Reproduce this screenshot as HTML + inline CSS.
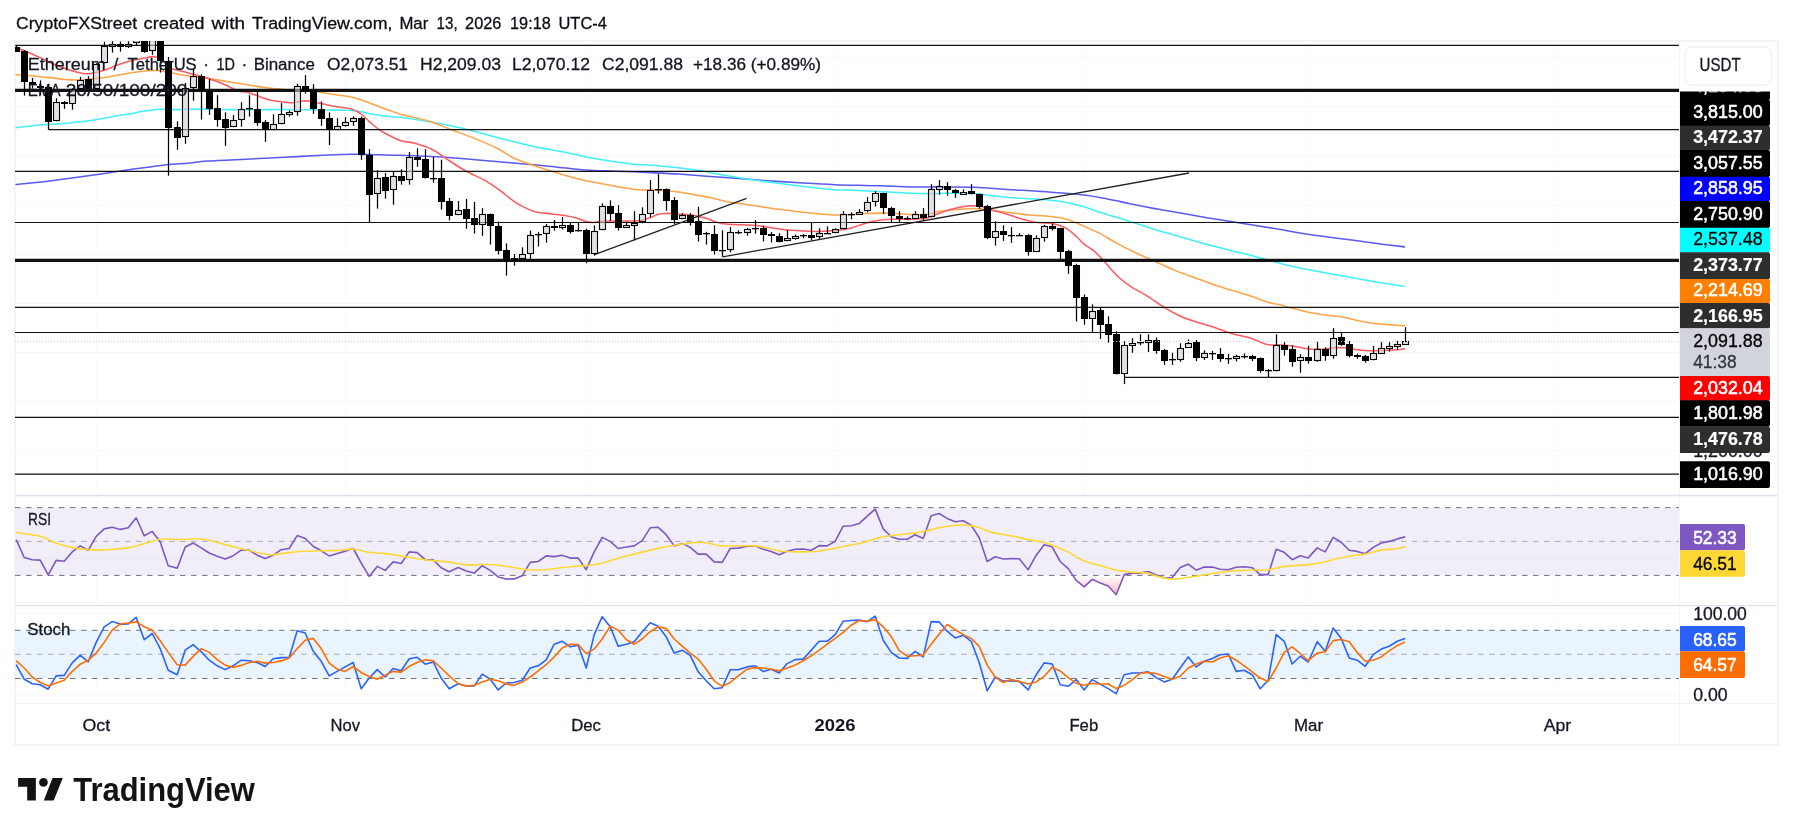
<!DOCTYPE html>
<html lang="en"><head><meta charset="utf-8"><title>ETHUSDT 1D chart</title>
<style>html,body{margin:0;padding:0;background:#fff;}body{width:1793px;height:835px;overflow:hidden;}svg{display:block;will-change:transform;}text{font-family:"Liberation Sans", sans-serif;}</style></head><body>
<svg width="1793" height="835" viewBox="0 0 1793 835">
<defs>
<clipPath id="cpMain"><rect x="15" y="41" width="1664" height="454"/></clipPath>
<clipPath id="cpRsi"><rect x="15" y="496" width="1664" height="109"/></clipPath>
<clipPath id="cpSt"><rect x="15" y="606" width="1664" height="97"/></clipPath>
<clipPath id="cpAxis"><rect x="1679" y="91.5" width="99" height="404"/></clipPath>
<linearGradient id="gOS" x1="0" y1="0" x2="0" y2="1"><stop offset="0" stop-color="#ffffff"/><stop offset="1" stop-color="#f7a8ad"/></linearGradient>
</defs>
<rect x="0" y="0" width="1793" height="835" fill="#ffffff"/>
<rect x="14.9" y="40.9" width="1763" height="704.1" fill="#ffffff" stroke="#f3f3f3" stroke-width="1.8"/>
<line x1="15" x2="1679" y1="57.5" y2="57.5" stroke="#f7f7f9" stroke-width="1"/>
<line x1="15" x2="1679" y1="106.6" y2="106.6" stroke="#f7f7f9" stroke-width="1"/>
<line x1="15" x2="1679" y1="155.8" y2="155.8" stroke="#f7f7f9" stroke-width="1"/>
<line x1="15" x2="1679" y1="205.0" y2="205.0" stroke="#f7f7f9" stroke-width="1"/>
<line x1="15" x2="1679" y1="254.2" y2="254.2" stroke="#f7f7f9" stroke-width="1"/>
<line x1="15" x2="1679" y1="303.4" y2="303.4" stroke="#f7f7f9" stroke-width="1"/>
<line x1="15" x2="1679" y1="352.6" y2="352.6" stroke="#f7f7f9" stroke-width="1"/>
<line x1="15" x2="1679" y1="401.8" y2="401.8" stroke="#f7f7f9" stroke-width="1"/>
<line x1="15" x2="1679" y1="451.0" y2="451.0" stroke="#f7f7f9" stroke-width="1"/>
<line x1="15" x2="1679" y1="558.4" y2="558.4" stroke="#f7f7f9" stroke-width="1"/>
<line x1="15" x2="1679" y1="613.4" y2="613.4" stroke="#f7f7f9" stroke-width="1"/>
<line x1="15" x2="1679" y1="694.8" y2="694.8" stroke="#f7f7f9" stroke-width="1"/>
<line x1="96.7" x2="96.7" y1="41" y2="703" stroke="#fafafb" stroke-width="1"/>
<line x1="345.6" x2="345.6" y1="41" y2="703" stroke="#fafafb" stroke-width="1"/>
<line x1="586.5" x2="586.5" y1="41" y2="703" stroke="#fafafb" stroke-width="1"/>
<line x1="835.3" x2="835.3" y1="41" y2="703" stroke="#fafafb" stroke-width="1"/>
<line x1="1084.2" x2="1084.2" y1="41" y2="703" stroke="#fafafb" stroke-width="1"/>
<line x1="1309.0" x2="1309.0" y1="41" y2="703" stroke="#fafafb" stroke-width="1"/>
<line x1="1557.9" x2="1557.9" y1="41" y2="703" stroke="#fafafb" stroke-width="1"/>
<line x1="1679.5" x2="1679.5" y1="41" y2="745" stroke="#f6f6f8" stroke-width="1"/>
<line x1="15" x2="1777" y1="703.5" y2="703.5" stroke="#f3f3f5" stroke-width="1"/>
<line x1="15" x2="1777" y1="495.5" y2="495.5" stroke="#dfe3ee" stroke-width="1.3"/>
<line x1="15" x2="1777" y1="605.6" y2="605.6" stroke="#dfe3ee" stroke-width="1.2"/>
<g clip-path="url(#cpMain)">
<path d="M15.4 184.6 C21.8 183.9 40.5 182.1 53.5 180.5 C66.5 178.9 81.2 176.9 93.7 175.1 C106.2 173.3 119.1 171.2 128.5 169.8 C137.9 168.5 144.7 167.7 150.0 167.0 C155.3 166.3 157.4 165.9 160.6 165.5 C163.8 165.1 164.7 164.9 169.2 164.5 C173.7 164.1 181.0 163.8 187.4 163.2 C193.8 162.6 197.8 161.8 207.5 161.1 C217.2 160.4 233.0 159.8 245.8 159.2 C258.6 158.6 271.3 158.0 284.1 157.3 C296.9 156.7 310.9 155.8 322.4 155.3 C333.9 154.8 345.1 154.3 353.1 154.2 C361.1 154.1 362.8 154.4 370.3 154.6 C377.8 154.8 387.2 154.9 398.3 155.3 C409.4 155.7 423.8 156.1 436.6 156.8 C449.4 157.5 462.2 158.7 475.0 159.7 C487.8 160.7 500.5 161.9 513.3 163.0 C526.1 164.1 539.6 165.2 551.6 166.4 C563.6 167.6 574.2 169.3 585.0 170.1 C595.8 170.9 605.8 170.8 616.2 171.2 C626.6 171.6 637.1 172.0 647.5 172.5 C657.9 173.0 668.3 173.4 678.7 174.1 C689.1 174.8 699.5 175.6 709.9 176.4 C720.3 177.2 730.8 177.9 741.2 178.7 C751.6 179.5 762.0 180.4 772.4 181.1 C782.8 181.8 793.2 182.5 803.6 183.1 C814.0 183.7 824.6 184.3 834.8 184.7 C845.0 185.1 857.3 185.3 865.0 185.5 C872.7 185.7 873.3 185.6 881.2 185.8 C889.1 186.0 902.1 186.7 912.5 186.9 C922.9 187.1 933.3 186.8 943.7 186.9 C954.1 187.0 964.5 186.9 974.9 187.3 C985.3 187.7 995.8 188.8 1006.2 189.4 C1016.6 190.1 1027.0 190.5 1037.4 191.2 C1047.8 191.9 1060.8 192.9 1068.6 193.6 C1076.4 194.2 1079.0 194.4 1084.2 195.1 C1089.4 195.8 1094.6 196.6 1099.8 197.5 C1105.0 198.4 1110.5 199.6 1115.5 200.6 C1120.5 201.6 1122.6 202.2 1130.0 203.7 C1137.4 205.2 1148.3 207.4 1160.0 209.5 C1171.7 211.6 1186.7 214.2 1200.0 216.5 C1213.3 218.8 1226.1 220.8 1240.0 223.0 C1253.9 225.2 1272.2 228.1 1283.5 230.0 C1294.8 231.9 1297.1 232.7 1307.5 234.2 C1317.9 235.7 1333.0 237.5 1345.8 239.2 C1358.6 240.9 1374.2 243.1 1384.1 244.4 C1394.0 245.7 1401.6 246.5 1405.1 246.9" fill="none" stroke="#5a5af2" stroke-width="1.55" stroke-linejoin="round" stroke-linecap="butt"/>
<path d="M15.4 127.7 C19.0 127.3 30.4 125.8 36.8 125.2 C43.1 124.6 49.0 124.6 53.5 124.3 C58.0 124.0 57.5 124.2 63.7 123.6 C69.9 123.0 81.6 121.9 90.5 120.6 C99.4 119.3 111.0 116.9 117.3 115.8 C123.6 114.7 124.0 115.0 128.5 114.2 C133.0 113.4 138.9 111.9 144.2 111.1 C149.5 110.3 154.7 109.5 160.3 109.2 C165.9 109.0 171.4 109.6 177.7 109.6 C183.9 109.6 190.0 109.1 197.8 109.1 C205.6 109.1 216.0 109.4 224.7 109.5 C233.4 109.6 240.1 109.8 250.0 109.8 C259.9 109.8 272.0 109.4 284.1 109.4 C296.2 109.4 311.8 109.8 322.4 109.9 C333.0 110.0 341.7 109.9 348.0 110.2 C354.3 110.5 356.3 110.9 360.0 111.5 C363.7 112.1 365.3 113.0 370.3 113.8 C375.3 114.6 384.7 116.0 389.9 116.6 C395.1 117.2 395.2 116.7 401.6 117.5 C408.0 118.3 419.5 120.1 428.4 121.6 C437.3 123.1 448.3 125.3 455.1 126.7 C461.9 128.1 462.7 128.3 469.2 130.0 C475.7 131.7 486.8 134.8 494.1 136.7 C501.5 138.6 506.9 139.9 513.3 141.5 C519.7 143.1 526.0 144.9 532.4 146.3 C538.8 147.7 545.2 148.5 551.6 149.7 C558.0 150.9 564.4 152.1 570.8 153.4 C577.2 154.8 584.4 156.7 589.9 157.8 C595.4 158.9 596.7 159.0 603.7 160.0 C610.7 161.0 621.9 162.9 631.8 163.9 C641.7 164.9 652.7 165.2 663.1 166.2 C673.5 167.2 685.2 168.4 694.3 169.7 C703.4 171.0 709.9 172.7 717.7 174.1 C725.5 175.5 732.1 176.6 741.2 178.0 C750.3 179.4 762.0 181.2 772.4 182.6 C782.8 184.0 793.2 185.3 803.6 186.5 C814.0 187.7 827.1 189.1 834.8 189.7 C842.5 190.3 844.9 189.7 850.0 189.9 C855.1 190.1 860.4 190.6 865.6 190.9 C870.8 191.2 876.0 191.4 881.2 191.7 C886.4 192.0 891.6 192.2 896.8 192.5 C902.0 192.8 907.3 193.1 912.5 193.3 C917.7 193.5 922.9 193.6 928.1 193.6 C933.3 193.6 938.5 193.4 943.7 193.3 C948.9 193.2 954.1 193.2 959.3 193.3 C964.5 193.4 969.7 193.2 974.9 193.6 C980.1 194.0 985.3 195.0 990.5 195.6 C995.7 196.2 1001.0 196.8 1006.2 197.2 C1011.4 197.6 1016.6 198.0 1021.8 198.3 C1027.0 198.7 1032.2 198.9 1037.4 199.3 C1042.6 199.7 1047.8 200.0 1053.0 200.6 C1058.2 201.2 1063.4 201.9 1068.6 202.9 C1073.8 203.9 1079.0 205.2 1084.2 206.8 C1089.4 208.4 1094.6 210.6 1099.8 212.3 C1105.0 214.0 1110.5 215.5 1115.5 217.0 C1120.5 218.5 1124.2 219.6 1130.0 221.4 C1135.8 223.2 1142.7 225.7 1150.0 228.0 C1157.3 230.3 1166.7 232.9 1174.0 235.0 C1181.3 237.1 1187.5 238.8 1194.1 240.7 C1200.6 242.5 1206.9 244.4 1213.3 246.1 C1219.7 247.8 1226.0 249.3 1232.4 250.9 C1238.8 252.5 1245.5 254.0 1251.6 255.6 C1257.7 257.2 1263.1 258.7 1269.2 260.3 C1275.3 261.9 1280.3 263.6 1288.3 265.4 C1296.3 267.2 1307.5 269.3 1317.1 271.2 C1326.7 273.1 1336.2 274.9 1345.8 276.6 C1355.4 278.4 1364.6 280.1 1374.5 281.7 C1384.4 283.3 1400.0 285.5 1405.1 286.3" fill="none" stroke="#40f0f9" stroke-width="1.55" stroke-linejoin="round" stroke-linecap="butt"/>
<path d="M15.4 74.6 C19.0 74.9 28.7 75.4 36.8 76.2 C44.8 77.0 56.5 78.7 63.7 79.3 C70.9 79.9 73.1 80.3 79.8 80.0 C86.5 79.7 95.4 78.8 103.9 77.6 C112.4 76.4 122.2 74.1 130.7 72.9 C139.2 71.7 148.2 70.2 154.9 70.2 C161.6 70.2 165.4 71.8 171.0 72.8 C176.6 73.8 182.2 75.1 188.3 76.0 C194.4 76.9 201.1 77.4 207.5 78.3 C213.9 79.2 220.2 80.4 226.6 81.4 C233.0 82.4 239.4 83.5 245.8 84.5 C252.2 85.5 258.6 86.7 265.0 87.5 C271.4 88.3 277.7 89.0 284.1 89.4 C290.5 89.9 296.9 89.7 303.3 90.2 C309.7 90.8 316.0 91.8 322.4 92.7 C328.8 93.6 336.8 94.9 341.6 95.6 C346.4 96.3 348.0 96.4 351.2 97.1 C354.4 97.8 357.6 98.8 360.8 99.8 C364.0 100.8 367.1 102.0 370.3 103.2 C373.5 104.4 376.6 105.9 379.9 107.1 C383.2 108.3 386.3 109.2 389.9 110.5 C393.5 111.8 395.2 112.8 401.6 114.6 C408.0 116.3 420.0 118.4 428.4 121.0 C436.8 123.6 444.2 127.1 452.0 130.0 C459.8 132.9 467.3 135.5 475.0 138.6 C482.7 141.7 491.6 145.6 498.0 148.8 C504.4 152.0 507.6 155.1 513.3 157.8 C519.0 160.5 526.0 162.9 532.4 165.1 C538.8 167.3 545.2 169.2 551.6 171.2 C558.0 173.2 565.0 175.3 570.8 176.9 C576.5 178.5 581.1 179.7 586.1 180.8 C591.1 181.9 595.6 182.5 600.6 183.4 C605.6 184.3 611.0 185.6 616.2 186.5 C621.4 187.4 626.6 188.3 631.8 188.9 C637.0 189.5 642.3 189.8 647.5 190.0 C652.7 190.2 657.9 190.1 663.1 190.4 C668.3 190.7 673.5 191.3 678.7 192.0 C683.9 192.7 689.1 193.8 694.3 194.7 C699.5 195.6 704.7 196.4 709.9 197.5 C715.1 198.6 720.3 200.4 725.5 201.4 C730.7 202.4 736.0 202.9 741.2 203.7 C746.4 204.5 751.6 205.3 756.8 206.1 C762.0 206.9 767.2 207.7 772.4 208.4 C777.6 209.1 782.8 209.7 788.0 210.3 C793.2 211.0 798.4 211.7 803.6 212.3 C808.8 212.9 814.0 213.5 819.2 213.9 C824.4 214.3 829.6 214.9 834.8 215.0 C840.0 215.1 845.4 214.7 850.5 214.5 C855.6 214.3 860.5 213.8 865.6 213.6 C870.7 213.4 876.0 213.1 881.2 213.1 C886.4 213.1 891.6 213.3 896.8 213.6 C902.0 213.9 907.3 214.6 912.5 214.7 C917.7 214.8 924.0 214.8 928.1 214.3 C932.2 213.8 933.5 212.5 937.4 211.8 C941.3 211.1 946.5 210.5 951.5 210.0 C956.5 209.5 961.9 208.9 967.1 208.7 C972.3 208.5 977.5 208.5 982.7 208.9 C987.9 209.3 993.1 210.5 998.3 211.2 C1003.5 211.9 1008.8 212.5 1014.0 213.1 C1019.2 213.7 1024.4 214.5 1029.6 215.0 C1034.8 215.5 1040.0 215.4 1045.2 215.9 C1050.4 216.4 1056.4 217.0 1060.8 217.8 C1065.2 218.6 1067.8 219.5 1071.7 220.9 C1075.6 222.3 1079.5 224.3 1084.2 226.4 C1088.9 228.5 1094.2 230.5 1099.8 233.4 C1105.3 236.3 1111.4 240.3 1117.5 243.6 C1123.6 246.9 1130.2 250.2 1136.6 253.2 C1143.0 256.2 1149.4 258.9 1155.8 261.8 C1162.2 264.7 1168.6 267.8 1175.0 270.4 C1181.4 273.0 1187.7 275.2 1194.1 277.5 C1200.5 279.8 1206.9 282.2 1213.3 284.4 C1219.7 286.6 1226.0 288.6 1232.4 290.6 C1238.8 292.6 1245.8 294.4 1251.6 296.3 C1257.4 298.2 1262.4 300.8 1267.2 302.2 C1272.0 303.6 1276.8 304.0 1280.3 304.8 C1283.8 305.6 1283.8 306.0 1288.3 307.2 C1292.8 308.4 1301.1 310.6 1307.5 312.0 C1313.9 313.4 1321.2 314.5 1326.6 315.3 C1332.0 316.1 1335.3 315.8 1340.1 316.6 C1344.9 317.4 1349.7 319.0 1355.4 320.1 C1361.1 321.2 1368.1 322.7 1374.5 323.5 C1380.9 324.3 1388.6 324.6 1393.7 325.0 C1398.8 325.4 1403.2 325.7 1405.1 325.8" fill="none" stroke="#ffa347" stroke-width="1.55" stroke-linejoin="round" stroke-linecap="butt"/>
<path d="M15.5 47.0 C16.1 47.3 15.8 47.2 19.4 48.7 C22.9 50.2 30.5 53.3 36.8 56.1 C43.1 58.9 50.3 62.8 57.0 65.5 C63.7 68.2 71.9 70.8 77.0 72.2 C82.1 73.6 83.3 74.1 87.8 73.8 C92.3 73.5 97.9 72.0 103.9 70.2 C109.9 68.4 117.3 64.8 124.0 62.8 C130.7 60.8 139.0 59.1 144.2 58.1 C149.3 57.1 151.6 56.1 154.9 56.8 C158.2 57.5 161.9 60.3 164.3 62.1 C166.7 63.9 165.2 66.0 169.2 67.8 C173.2 69.6 181.9 71.2 188.3 73.0 C194.7 74.8 201.1 76.2 207.5 78.3 C213.9 80.4 221.5 83.4 226.6 85.5 C231.7 87.6 234.3 89.8 238.0 91.0 C241.7 92.2 244.1 91.3 249.0 92.7 C253.9 94.1 262.5 97.9 267.7 99.4 C272.9 100.9 276.3 101.1 280.3 101.7 C284.3 102.3 288.0 102.9 291.8 102.8 C295.6 102.7 299.8 101.1 303.3 100.9 C306.8 100.7 308.1 100.8 312.9 101.7 C317.7 102.6 325.6 104.9 332.0 106.1 C338.4 107.3 346.4 107.7 351.2 109.0 C356.0 110.3 357.6 111.6 360.8 113.8 C364.0 116.0 367.1 119.7 370.3 122.4 C373.5 125.1 376.6 127.9 379.9 130.1 C383.2 132.3 386.5 134.1 389.9 135.8 C393.3 137.5 395.9 139.2 400.2 140.5 C404.5 141.8 410.2 141.9 415.6 143.4 C421.0 144.9 427.7 147.1 432.8 149.7 C437.9 152.2 440.8 155.2 446.2 158.7 C451.6 162.2 459.0 167.2 465.4 170.8 C471.8 174.4 478.8 176.9 484.5 180.2 C490.2 183.5 495.1 186.9 499.9 190.4 C504.7 193.9 509.5 198.2 513.3 200.9 C517.1 203.6 519.1 204.8 522.9 206.6 C526.7 208.4 531.5 210.8 536.3 212.0 C541.1 213.2 547.1 213.3 551.6 213.9 C556.1 214.5 559.0 214.6 563.1 215.3 C567.2 216.0 572.7 217.1 576.5 218.1 C580.3 219.1 583.2 220.9 586.1 221.6 C589.0 222.3 591.4 222.5 593.8 222.4 C596.2 222.3 596.9 221.4 600.6 221.2 C604.3 220.9 610.2 220.9 616.2 220.9 C622.2 220.9 631.3 221.3 636.5 220.9 C641.7 220.5 643.9 219.7 647.5 218.6 C651.1 217.5 655.3 215.2 658.4 214.3 C661.5 213.4 662.8 213.5 666.2 213.4 C669.6 213.3 674.0 213.6 678.7 213.9 C683.4 214.2 689.6 214.6 694.3 215.4 C699.0 216.2 702.9 217.4 706.8 218.6 C710.7 219.8 714.6 221.6 717.7 222.5 C720.8 223.4 721.6 223.6 725.5 224.0 C729.4 224.4 736.0 224.5 741.2 224.8 C746.4 225.1 751.6 225.1 756.8 225.6 C762.0 226.1 767.2 227.2 772.4 227.9 C777.6 228.6 782.8 229.5 788.0 230.0 C793.2 230.5 798.4 230.8 803.6 231.0 C808.8 231.2 814.0 231.6 819.2 231.5 C824.4 231.4 829.6 231.2 834.8 230.6 C840.0 230.0 845.4 229.4 850.5 228.2 C855.6 227.0 860.5 224.5 865.6 223.2 C870.7 221.8 876.0 220.8 881.2 220.1 C886.4 219.4 891.6 219.4 896.8 219.3 C902.0 219.2 907.3 219.6 912.5 219.3 C917.7 219.1 924.0 218.7 928.1 217.8 C932.2 216.9 933.5 215.3 937.4 213.9 C941.3 212.5 946.5 210.5 951.5 209.2 C956.5 207.9 963.2 206.7 967.1 206.1 C971.0 205.5 972.3 205.7 974.9 205.8 C977.5 205.9 980.1 206.2 982.7 206.8 C985.3 207.5 986.6 208.5 990.5 209.7 C994.4 210.9 1001.0 212.3 1006.2 213.9 C1011.4 215.5 1016.6 217.6 1021.8 219.0 C1027.0 220.4 1032.2 221.7 1037.4 222.5 C1042.6 223.3 1048.3 222.8 1053.0 223.7 C1057.7 224.6 1061.6 225.8 1065.5 227.9 C1069.4 230.0 1073.3 233.8 1076.4 236.5 C1079.5 239.2 1081.3 242.0 1084.2 244.3 C1087.1 246.7 1090.5 248.0 1093.6 250.6 C1096.7 253.2 1099.0 255.7 1103.0 260.0 C1107.0 264.3 1112.8 271.8 1117.5 276.2 C1122.2 280.6 1126.1 283.5 1130.9 286.7 C1135.7 289.9 1140.8 292.0 1146.2 295.4 C1151.6 298.8 1158.1 303.5 1163.5 306.9 C1168.9 310.2 1173.7 313.1 1178.8 315.5 C1183.9 317.9 1188.3 319.3 1194.1 321.2 C1199.8 323.1 1206.9 324.9 1213.3 327.0 C1219.7 329.1 1226.0 331.8 1232.4 333.7 C1238.8 335.6 1245.8 336.7 1251.6 338.5 C1257.3 340.3 1262.1 343.5 1266.9 344.6 C1271.7 345.7 1276.1 344.7 1280.3 344.9 C1284.5 345.1 1287.7 345.2 1292.2 345.9 C1296.7 346.5 1302.4 348.2 1307.5 348.8 C1312.6 349.4 1318.3 349.4 1322.8 349.2 C1327.3 349.0 1330.5 348.0 1334.3 347.8 C1338.1 347.6 1342.0 347.5 1345.8 347.8 C1349.6 348.1 1353.8 349.3 1357.3 349.8 C1360.8 350.3 1363.7 350.6 1366.9 350.7 C1370.1 350.8 1373.0 350.8 1376.5 350.7 C1380.0 350.6 1384.2 350.5 1388.0 350.3 C1391.8 350.1 1396.7 349.6 1399.5 349.4 C1402.3 349.1 1404.2 348.9 1405.1 348.8" fill="none" stroke="#ff5a5f" stroke-width="1.55" stroke-linejoin="round" stroke-linecap="butt"/>
<line x1="15.3" x2="1679" y1="45.4" y2="45.4" stroke="#111111" stroke-width="1.15"/>
<line x1="15.0" x2="1679" y1="90.4" y2="90.4" stroke="#111111" stroke-width="3.2"/>
<line x1="48.3" x2="1679" y1="129.6" y2="129.6" stroke="#111111" stroke-width="1.15"/>
<line x1="15.0" x2="1679" y1="171.3" y2="171.3" stroke="#111111" stroke-width="1.15"/>
<line x1="15.0" x2="1679" y1="222.5" y2="222.5" stroke="#111111" stroke-width="1.15"/>
<line x1="15.0" x2="1679" y1="260.4" y2="260.4" stroke="#111111" stroke-width="3.2"/>
<line x1="15.0" x2="1679" y1="307.3" y2="307.3" stroke="#111111" stroke-width="1.15"/>
<line x1="15.0" x2="1679" y1="332.5" y2="332.5" stroke="#111111" stroke-width="1.15"/>
<line x1="1124.5" x2="1679" y1="377.3" y2="377.3" stroke="#111111" stroke-width="1.15"/>
<line x1="15.0" x2="1679" y1="417.3" y2="417.3" stroke="#111111" stroke-width="1.15"/>
<line x1="15.0" x2="1679" y1="474.1" y2="474.1" stroke="#111111" stroke-width="1.15"/>
<line x1="594.4" y1="254.6" x2="746.6" y2="198.3" stroke="#222" stroke-width="1.3"/>
<line x1="722.6" y1="256.9" x2="1189" y2="173.0" stroke="#222" stroke-width="1.3"/>
<line x1="16.5" x2="16.5" y1="45.4" y2="52.0" stroke="#000" stroke-width="1.25"/>
<rect x="13.0" y="47" width="7" height="5" fill="#000"/>
<line x1="24.5" x2="24.5" y1="50.0" y2="95.7" stroke="#000" stroke-width="1.25"/>
<rect x="21.0" y="51" width="7" height="31" fill="#000"/>
<line x1="32.5" x2="32.5" y1="78.0" y2="88.5" stroke="#000" stroke-width="1.25"/>
<rect x="29.0" y="82" width="7" height="3" fill="#000"/>
<line x1="40.5" x2="40.5" y1="80.3" y2="95.0" stroke="#000" stroke-width="1.25"/>
<rect x="37.0" y="86" width="7" height="2" fill="#000"/>
<line x1="48.5" x2="48.5" y1="85.6" y2="129.4" stroke="#000" stroke-width="1.25"/>
<rect x="45.0" y="87" width="7" height="35" fill="#000"/>
<line x1="56.5" x2="56.5" y1="98.3" y2="102.5" stroke="#000" stroke-width="1.25"/>
<line x1="56.5" x2="56.5" y1="120.5" y2="121.3" stroke="#000" stroke-width="1.25"/>
<rect x="53.5" y="102.5" width="6" height="18" fill="rgba(205,205,216,0.6)" stroke="#000" stroke-width="1.1"/>
<line x1="64.5" x2="64.5" y1="101.1" y2="108.9" stroke="#000" stroke-width="1.25"/>
<rect x="61.0" y="102" width="7" height="2" fill="#000"/>
<line x1="72.5" x2="72.5" y1="88.3" y2="89.5" stroke="#000" stroke-width="1.25"/>
<line x1="72.5" x2="72.5" y1="103.5" y2="109.7" stroke="#000" stroke-width="1.25"/>
<rect x="69.5" y="89.5" width="6" height="14" fill="rgba(205,205,216,0.6)" stroke="#000" stroke-width="1.1"/>
<line x1="80.5" x2="80.5" y1="77.0" y2="80.5" stroke="#000" stroke-width="1.25"/>
<line x1="80.5" x2="80.5" y1="88.5" y2="89.0" stroke="#000" stroke-width="1.25"/>
<rect x="77.5" y="80.5" width="6" height="8" fill="rgba(205,205,216,0.6)" stroke="#000" stroke-width="1.1"/>
<line x1="88.5" x2="88.5" y1="76.2" y2="89.0" stroke="#000" stroke-width="1.25"/>
<rect x="85.0" y="79" width="7" height="10" fill="#000"/>
<line x1="96.5" x2="96.5" y1="63.2" y2="64.5" stroke="#000" stroke-width="1.25"/>
<line x1="96.5" x2="96.5" y1="88.5" y2="89.0" stroke="#000" stroke-width="1.25"/>
<rect x="93.5" y="64.5" width="6" height="24" fill="rgba(205,205,216,0.6)" stroke="#000" stroke-width="1.1"/>
<line x1="104.5" x2="104.5" y1="41.8" y2="46.5" stroke="#000" stroke-width="1.25"/>
<line x1="104.5" x2="104.5" y1="62.5" y2="63.4" stroke="#000" stroke-width="1.25"/>
<rect x="101.5" y="46.5" width="6" height="16" fill="rgba(205,205,216,0.6)" stroke="#000" stroke-width="1.1"/>
<line x1="112.5" x2="112.5" y1="41.2" y2="44.5" stroke="#000" stroke-width="1.25"/>
<line x1="112.5" x2="112.5" y1="46.5" y2="52.6" stroke="#000" stroke-width="1.25"/>
<rect x="109.5" y="44.5" width="6" height="2" fill="rgba(205,205,216,0.6)" stroke="#000" stroke-width="1.1"/>
<line x1="120.5" x2="120.5" y1="41.6" y2="51.6" stroke="#000" stroke-width="1.25"/>
<rect x="117.0" y="44" width="7" height="3" fill="#000"/>
<line x1="128.5" x2="128.5" y1="41.3" y2="44.5" stroke="#000" stroke-width="1.25"/>
<line x1="128.5" x2="128.5" y1="46.5" y2="48.0" stroke="#000" stroke-width="1.25"/>
<rect x="125.5" y="44.5" width="6" height="2" fill="rgba(205,205,216,0.6)" stroke="#000" stroke-width="1.1"/>
<line x1="136.5" x2="136.5" y1="38.0" y2="38.5" stroke="#000" stroke-width="1.25"/>
<line x1="136.5" x2="136.5" y1="42.5" y2="45.0" stroke="#000" stroke-width="1.25"/>
<rect x="133.5" y="38.5" width="6" height="4" fill="rgba(205,205,216,0.6)" stroke="#000" stroke-width="1.1"/>
<line x1="144.5" x2="144.5" y1="36.0" y2="52.7" stroke="#000" stroke-width="1.25"/>
<rect x="141.0" y="36" width="7" height="16" fill="#000"/>
<line x1="152.5" x2="152.5" y1="34.0" y2="36.5" stroke="#000" stroke-width="1.25"/>
<line x1="152.5" x2="152.5" y1="50.5" y2="54.8" stroke="#000" stroke-width="1.25"/>
<rect x="149.5" y="36.5" width="6" height="14" fill="rgba(205,205,216,0.6)" stroke="#000" stroke-width="1.1"/>
<line x1="160.5" x2="160.5" y1="34.0" y2="72.5" stroke="#000" stroke-width="1.25"/>
<rect x="157.0" y="36" width="7" height="25" fill="#000"/>
<line x1="168.5" x2="168.5" y1="57.0" y2="175.7" stroke="#000" stroke-width="1.25"/>
<rect x="165.0" y="61" width="7" height="67" fill="#000"/>
<line x1="177.5" x2="177.5" y1="121.3" y2="149.8" stroke="#000" stroke-width="1.25"/>
<rect x="174.0" y="127" width="7" height="11" fill="#000"/>
<line x1="185.5" x2="185.5" y1="83.0" y2="88.5" stroke="#000" stroke-width="1.25"/>
<line x1="185.5" x2="185.5" y1="136.5" y2="143.8" stroke="#000" stroke-width="1.25"/>
<rect x="182.5" y="88.5" width="6" height="48" fill="rgba(205,205,216,0.6)" stroke="#000" stroke-width="1.1"/>
<line x1="193.5" x2="193.5" y1="68.7" y2="76.5" stroke="#000" stroke-width="1.25"/>
<line x1="193.5" x2="193.5" y1="87.5" y2="100.7" stroke="#000" stroke-width="1.25"/>
<rect x="190.5" y="76.5" width="6" height="11" fill="rgba(205,205,216,0.6)" stroke="#000" stroke-width="1.1"/>
<line x1="201.5" x2="201.5" y1="74.3" y2="119.6" stroke="#000" stroke-width="1.25"/>
<rect x="198.0" y="76" width="7" height="15" fill="#000"/>
<line x1="209.5" x2="209.5" y1="79.1" y2="114.9" stroke="#000" stroke-width="1.25"/>
<rect x="206.0" y="91" width="7" height="18" fill="#000"/>
<line x1="217.5" x2="217.5" y1="95.1" y2="126.7" stroke="#000" stroke-width="1.25"/>
<rect x="214.0" y="108" width="7" height="12" fill="#000"/>
<line x1="225.5" x2="225.5" y1="112.3" y2="145.9" stroke="#000" stroke-width="1.25"/>
<rect x="222.0" y="119" width="7" height="9" fill="#000"/>
<line x1="233.5" x2="233.5" y1="115.1" y2="120.5" stroke="#000" stroke-width="1.25"/>
<line x1="233.5" x2="233.5" y1="126.5" y2="127.2" stroke="#000" stroke-width="1.25"/>
<rect x="230.5" y="120.5" width="6" height="6" fill="rgba(205,205,216,0.6)" stroke="#000" stroke-width="1.1"/>
<line x1="241.5" x2="241.5" y1="102.2" y2="109.5" stroke="#000" stroke-width="1.25"/>
<line x1="241.5" x2="241.5" y1="119.5" y2="126.7" stroke="#000" stroke-width="1.25"/>
<rect x="238.5" y="109.5" width="6" height="10" fill="rgba(205,205,216,0.6)" stroke="#000" stroke-width="1.1"/>
<line x1="249.5" x2="249.5" y1="95.2" y2="116.6" stroke="#000" stroke-width="1.25"/>
<rect x="246.0" y="108" width="7" height="1.3" fill="#000"/>
<line x1="257.5" x2="257.5" y1="91.7" y2="125.8" stroke="#000" stroke-width="1.25"/>
<rect x="254.0" y="109" width="7" height="14" fill="#000"/>
<line x1="265.5" x2="265.5" y1="120.1" y2="141.9" stroke="#000" stroke-width="1.25"/>
<rect x="262.0" y="122" width="7" height="8" fill="#000"/>
<line x1="273.5" x2="273.5" y1="114.3" y2="124.5" stroke="#000" stroke-width="1.25"/>
<line x1="273.5" x2="273.5" y1="129.5" y2="130.1" stroke="#000" stroke-width="1.25"/>
<rect x="270.5" y="124.5" width="6" height="5" fill="rgba(205,205,216,0.6)" stroke="#000" stroke-width="1.1"/>
<line x1="281.5" x2="281.5" y1="103.2" y2="114.5" stroke="#000" stroke-width="1.25"/>
<line x1="281.5" x2="281.5" y1="123.5" y2="124.3" stroke="#000" stroke-width="1.25"/>
<rect x="278.5" y="114.5" width="6" height="9" fill="rgba(205,205,216,0.6)" stroke="#000" stroke-width="1.1"/>
<line x1="289.5" x2="289.5" y1="110.5" y2="112.5" stroke="#000" stroke-width="1.25"/>
<line x1="289.5" x2="289.5" y1="114.5" y2="116.6" stroke="#000" stroke-width="1.25"/>
<rect x="286.5" y="112.5" width="6" height="2" fill="rgba(205,205,216,0.6)" stroke="#000" stroke-width="1.1"/>
<line x1="297.5" x2="297.5" y1="83.7" y2="86.5" stroke="#000" stroke-width="1.25"/>
<line x1="297.5" x2="297.5" y1="111.5" y2="115.7" stroke="#000" stroke-width="1.25"/>
<rect x="294.5" y="86.5" width="6" height="25" fill="rgba(205,205,216,0.6)" stroke="#000" stroke-width="1.1"/>
<line x1="305.5" x2="305.5" y1="75.1" y2="93.6" stroke="#000" stroke-width="1.25"/>
<rect x="302.0" y="86" width="7" height="5" fill="#000"/>
<line x1="313.5" x2="313.5" y1="84.1" y2="113.8" stroke="#000" stroke-width="1.25"/>
<rect x="310.0" y="90" width="7" height="19" fill="#000"/>
<line x1="321.5" x2="321.5" y1="101.3" y2="125.8" stroke="#000" stroke-width="1.25"/>
<rect x="318.0" y="109" width="7" height="10" fill="#000"/>
<line x1="329.5" x2="329.5" y1="112.4" y2="145.0" stroke="#000" stroke-width="1.25"/>
<rect x="326.0" y="118" width="7" height="12" fill="#000"/>
<line x1="337.5" x2="337.5" y1="118.2" y2="126.5" stroke="#000" stroke-width="1.25"/>
<line x1="337.5" x2="337.5" y1="129.5" y2="130.1" stroke="#000" stroke-width="1.25"/>
<rect x="334.5" y="126.5" width="6" height="3" fill="rgba(205,205,216,0.6)" stroke="#000" stroke-width="1.1"/>
<line x1="345.5" x2="345.5" y1="117.2" y2="122.5" stroke="#000" stroke-width="1.25"/>
<line x1="345.5" x2="345.5" y1="125.5" y2="126.6" stroke="#000" stroke-width="1.25"/>
<rect x="342.5" y="122.5" width="6" height="3" fill="rgba(205,205,216,0.6)" stroke="#000" stroke-width="1.1"/>
<line x1="353.5" x2="353.5" y1="116.3" y2="118.5" stroke="#000" stroke-width="1.25"/>
<line x1="353.5" x2="353.5" y1="121.5" y2="125.8" stroke="#000" stroke-width="1.25"/>
<rect x="350.5" y="118.5" width="6" height="3" fill="rgba(205,205,216,0.6)" stroke="#000" stroke-width="1.1"/>
<line x1="361.5" x2="361.5" y1="116.6" y2="159.8" stroke="#000" stroke-width="1.25"/>
<rect x="358.0" y="118" width="7" height="37" fill="#000"/>
<line x1="369.5" x2="369.5" y1="149.2" y2="222.4" stroke="#000" stroke-width="1.25"/>
<rect x="366.0" y="155" width="7" height="40" fill="#000"/>
<line x1="377.5" x2="377.5" y1="170.2" y2="178.5" stroke="#000" stroke-width="1.25"/>
<line x1="377.5" x2="377.5" y1="193.5" y2="208.6" stroke="#000" stroke-width="1.25"/>
<rect x="374.5" y="178.5" width="6" height="15" fill="rgba(205,205,216,0.6)" stroke="#000" stroke-width="1.1"/>
<line x1="385.5" x2="385.5" y1="173.1" y2="198.7" stroke="#000" stroke-width="1.25"/>
<rect x="382.0" y="177" width="7" height="14" fill="#000"/>
<line x1="393.5" x2="393.5" y1="171.2" y2="176.5" stroke="#000" stroke-width="1.25"/>
<line x1="393.5" x2="393.5" y1="189.5" y2="204.7" stroke="#000" stroke-width="1.25"/>
<rect x="390.5" y="176.5" width="6" height="13" fill="rgba(205,205,216,0.6)" stroke="#000" stroke-width="1.1"/>
<line x1="401.5" x2="401.5" y1="169.3" y2="184.6" stroke="#000" stroke-width="1.25"/>
<rect x="398.0" y="176" width="7" height="5" fill="#000"/>
<line x1="409.5" x2="409.5" y1="152.0" y2="157.5" stroke="#000" stroke-width="1.25"/>
<line x1="409.5" x2="409.5" y1="179.5" y2="184.6" stroke="#000" stroke-width="1.25"/>
<rect x="406.5" y="157.5" width="6" height="22" fill="rgba(205,205,216,0.6)" stroke="#000" stroke-width="1.1"/>
<line x1="417.5" x2="417.5" y1="148.2" y2="166.8" stroke="#000" stroke-width="1.25"/>
<rect x="414.0" y="157" width="7" height="3" fill="#000"/>
<line x1="425.5" x2="425.5" y1="149.2" y2="178.5" stroke="#000" stroke-width="1.25"/>
<rect x="422.0" y="159" width="7" height="19" fill="#000"/>
<line x1="433.5" x2="433.5" y1="156.8" y2="182.7" stroke="#000" stroke-width="1.25"/>
<rect x="430.0" y="178" width="7" height="1.3" fill="#000"/>
<line x1="441.5" x2="441.5" y1="159.7" y2="209.5" stroke="#000" stroke-width="1.25"/>
<rect x="438.0" y="178" width="7" height="24" fill="#000"/>
<line x1="449.5" x2="449.5" y1="198.0" y2="220.4" stroke="#000" stroke-width="1.25"/>
<rect x="446.0" y="201" width="7" height="15" fill="#000"/>
<line x1="458.5" x2="458.5" y1="200.9" y2="210.5" stroke="#000" stroke-width="1.25"/>
<line x1="458.5" x2="458.5" y1="214.5" y2="215.3" stroke="#000" stroke-width="1.25"/>
<rect x="455.5" y="210.5" width="6" height="4" fill="rgba(205,205,216,0.6)" stroke="#000" stroke-width="1.1"/>
<line x1="466.5" x2="466.5" y1="199.0" y2="228.7" stroke="#000" stroke-width="1.25"/>
<rect x="463.0" y="209" width="7" height="10" fill="#000"/>
<line x1="474.5" x2="474.5" y1="201.9" y2="233.5" stroke="#000" stroke-width="1.25"/>
<rect x="471.0" y="218" width="7" height="7" fill="#000"/>
<line x1="482.5" x2="482.5" y1="208.2" y2="214.5" stroke="#000" stroke-width="1.25"/>
<line x1="482.5" x2="482.5" y1="224.5" y2="235.8" stroke="#000" stroke-width="1.25"/>
<rect x="479.5" y="214.5" width="6" height="10" fill="rgba(205,205,216,0.6)" stroke="#000" stroke-width="1.1"/>
<line x1="490.5" x2="490.5" y1="213.5" y2="244.6" stroke="#000" stroke-width="1.25"/>
<rect x="487.0" y="214" width="7" height="12" fill="#000"/>
<line x1="498.5" x2="498.5" y1="221.6" y2="254.5" stroke="#000" stroke-width="1.25"/>
<rect x="495.0" y="226" width="7" height="25" fill="#000"/>
<line x1="506.5" x2="506.5" y1="243.4" y2="275.6" stroke="#000" stroke-width="1.25"/>
<rect x="503.0" y="250" width="7" height="10" fill="#000"/>
<line x1="514.5" x2="514.5" y1="254.2" y2="265.7" stroke="#000" stroke-width="1.25"/>
<rect x="511.0" y="258" width="7" height="1.3" fill="#000"/>
<line x1="522.5" x2="522.5" y1="247.3" y2="254.5" stroke="#000" stroke-width="1.25"/>
<line x1="522.5" x2="522.5" y1="258.5" y2="258.8" stroke="#000" stroke-width="1.25"/>
<rect x="519.5" y="254.5" width="6" height="4" fill="rgba(205,205,216,0.6)" stroke="#000" stroke-width="1.1"/>
<line x1="530.5" x2="530.5" y1="230.6" y2="235.5" stroke="#000" stroke-width="1.25"/>
<line x1="530.5" x2="530.5" y1="253.5" y2="258.8" stroke="#000" stroke-width="1.25"/>
<rect x="527.5" y="235.5" width="6" height="18" fill="rgba(205,205,216,0.6)" stroke="#000" stroke-width="1.1"/>
<line x1="538.5" x2="538.5" y1="231.9" y2="246.5" stroke="#000" stroke-width="1.25"/>
<rect x="535.0" y="234" width="7" height="1.3" fill="#000"/>
<line x1="546.5" x2="546.5" y1="223.9" y2="226.5" stroke="#000" stroke-width="1.25"/>
<line x1="546.5" x2="546.5" y1="233.5" y2="242.7" stroke="#000" stroke-width="1.25"/>
<rect x="543.5" y="226.5" width="6" height="7" fill="rgba(205,205,216,0.6)" stroke="#000" stroke-width="1.1"/>
<line x1="554.5" x2="554.5" y1="220.0" y2="230.6" stroke="#000" stroke-width="1.25"/>
<rect x="551.0" y="226" width="7" height="2" fill="#000"/>
<line x1="562.5" x2="562.5" y1="217.2" y2="225.5" stroke="#000" stroke-width="1.25"/>
<line x1="562.5" x2="562.5" y1="227.5" y2="229.6" stroke="#000" stroke-width="1.25"/>
<rect x="559.5" y="225.5" width="6" height="2" fill="rgba(205,205,216,0.6)" stroke="#000" stroke-width="1.1"/>
<line x1="570.5" x2="570.5" y1="222.9" y2="233.5" stroke="#000" stroke-width="1.25"/>
<rect x="567.0" y="225" width="7" height="7" fill="#000"/>
<line x1="578.5" x2="578.5" y1="222.9" y2="231.6" stroke="#000" stroke-width="1.25"/>
<rect x="575.0" y="230" width="7" height="1.3" fill="#000"/>
<line x1="586.5" x2="586.5" y1="228.7" y2="263.3" stroke="#000" stroke-width="1.25"/>
<rect x="583.0" y="230" width="7" height="24" fill="#000"/>
<line x1="594.5" x2="594.5" y1="225.5" y2="231.5" stroke="#000" stroke-width="1.25"/>
<line x1="594.5" x2="594.5" y1="253.5" y2="255.6" stroke="#000" stroke-width="1.25"/>
<rect x="591.5" y="231.5" width="6" height="22" fill="rgba(205,205,216,0.6)" stroke="#000" stroke-width="1.1"/>
<line x1="602.5" x2="602.5" y1="203.4" y2="206.5" stroke="#000" stroke-width="1.25"/>
<line x1="602.5" x2="602.5" y1="229.5" y2="230.3" stroke="#000" stroke-width="1.25"/>
<rect x="599.5" y="206.5" width="6" height="23" fill="rgba(205,205,216,0.6)" stroke="#000" stroke-width="1.1"/>
<line x1="610.5" x2="610.5" y1="200.3" y2="220.9" stroke="#000" stroke-width="1.25"/>
<rect x="607.0" y="206" width="7" height="8" fill="#000"/>
<line x1="618.5" x2="618.5" y1="205.3" y2="230.6" stroke="#000" stroke-width="1.25"/>
<rect x="615.0" y="213" width="7" height="15" fill="#000"/>
<line x1="626.5" x2="626.5" y1="221.7" y2="225.5" stroke="#000" stroke-width="1.25"/>
<rect x="623.5" y="225.5" width="6" height="2" fill="rgba(205,205,216,0.6)" stroke="#000" stroke-width="1.1"/>
<line x1="634.5" x2="634.5" y1="211.2" y2="223.5" stroke="#000" stroke-width="1.25"/>
<line x1="634.5" x2="634.5" y1="225.5" y2="240.4" stroke="#000" stroke-width="1.25"/>
<rect x="631.5" y="223.5" width="6" height="2" fill="rgba(205,205,216,0.6)" stroke="#000" stroke-width="1.1"/>
<line x1="642.5" x2="642.5" y1="207.3" y2="214.5" stroke="#000" stroke-width="1.25"/>
<line x1="642.5" x2="642.5" y1="221.5" y2="223.2" stroke="#000" stroke-width="1.25"/>
<rect x="639.5" y="214.5" width="6" height="7" fill="rgba(205,205,216,0.6)" stroke="#000" stroke-width="1.1"/>
<line x1="650.5" x2="650.5" y1="180.0" y2="190.5" stroke="#000" stroke-width="1.25"/>
<line x1="650.5" x2="650.5" y1="213.5" y2="217.5" stroke="#000" stroke-width="1.25"/>
<rect x="647.5" y="190.5" width="6" height="23" fill="rgba(205,205,216,0.6)" stroke="#000" stroke-width="1.1"/>
<line x1="658.5" x2="658.5" y1="174.0" y2="193.6" stroke="#000" stroke-width="1.25"/>
<rect x="655.0" y="189" width="7" height="1.3" fill="#000"/>
<line x1="666.5" x2="666.5" y1="188.5" y2="210.7" stroke="#000" stroke-width="1.25"/>
<rect x="663.0" y="189" width="7" height="12" fill="#000"/>
<line x1="674.5" x2="674.5" y1="197.2" y2="224.0" stroke="#000" stroke-width="1.25"/>
<rect x="671.0" y="200" width="7" height="20" fill="#000"/>
<line x1="682.5" x2="682.5" y1="213.4" y2="215.5" stroke="#000" stroke-width="1.25"/>
<line x1="682.5" x2="682.5" y1="218.5" y2="219.3" stroke="#000" stroke-width="1.25"/>
<rect x="679.5" y="215.5" width="6" height="3" fill="rgba(205,205,216,0.6)" stroke="#000" stroke-width="1.1"/>
<line x1="690.5" x2="690.5" y1="213.1" y2="225.6" stroke="#000" stroke-width="1.25"/>
<rect x="687.0" y="215" width="7" height="7" fill="#000"/>
<line x1="698.5" x2="698.5" y1="206.8" y2="241.5" stroke="#000" stroke-width="1.25"/>
<rect x="695.0" y="221" width="7" height="14" fill="#000"/>
<line x1="706.5" x2="706.5" y1="231.8" y2="244.6" stroke="#000" stroke-width="1.25"/>
<rect x="703.0" y="233" width="7" height="1.3" fill="#000"/>
<line x1="714.5" x2="714.5" y1="225.3" y2="254.5" stroke="#000" stroke-width="1.25"/>
<rect x="711.0" y="234" width="7" height="17" fill="#000"/>
<line x1="722.5" x2="722.5" y1="230.3" y2="256.8" stroke="#000" stroke-width="1.25"/>
<rect x="719.0" y="250" width="7" height="1.3" fill="#000"/>
<line x1="730.5" x2="730.5" y1="227.1" y2="232.5" stroke="#000" stroke-width="1.25"/>
<line x1="730.5" x2="730.5" y1="249.5" y2="252.4" stroke="#000" stroke-width="1.25"/>
<rect x="727.5" y="232.5" width="6" height="17" fill="rgba(205,205,216,0.6)" stroke="#000" stroke-width="1.1"/>
<line x1="738.5" x2="738.5" y1="230.3" y2="234.2" stroke="#000" stroke-width="1.25"/>
<rect x="735.0" y="232" width="7" height="1.3" fill="#000"/>
<line x1="747.5" x2="747.5" y1="227.9" y2="229.5" stroke="#000" stroke-width="1.25"/>
<line x1="747.5" x2="747.5" y1="232.5" y2="235.7" stroke="#000" stroke-width="1.25"/>
<rect x="744.5" y="229.5" width="6" height="3" fill="rgba(205,205,216,0.6)" stroke="#000" stroke-width="1.1"/>
<line x1="755.5" x2="755.5" y1="220.1" y2="233.7" stroke="#000" stroke-width="1.25"/>
<rect x="752.0" y="228" width="7" height="1.3" fill="#000"/>
<line x1="763.5" x2="763.5" y1="225.6" y2="241.5" stroke="#000" stroke-width="1.25"/>
<rect x="760.0" y="228" width="7" height="7" fill="#000"/>
<line x1="771.5" x2="771.5" y1="232.1" y2="242.4" stroke="#000" stroke-width="1.25"/>
<rect x="768.0" y="234" width="7" height="2" fill="#000"/>
<line x1="779.5" x2="779.5" y1="233.1" y2="242.4" stroke="#000" stroke-width="1.25"/>
<rect x="776.0" y="236" width="7" height="6" fill="#000"/>
<line x1="787.5" x2="787.5" y1="230.0" y2="238.5" stroke="#000" stroke-width="1.25"/>
<line x1="787.5" x2="787.5" y1="240.5" y2="241.2" stroke="#000" stroke-width="1.25"/>
<rect x="784.5" y="238.5" width="6" height="2" fill="rgba(205,205,216,0.6)" stroke="#000" stroke-width="1.1"/>
<line x1="795.5" x2="795.5" y1="234.6" y2="236.5" stroke="#000" stroke-width="1.25"/>
<line x1="795.5" x2="795.5" y1="238.5" y2="239.6" stroke="#000" stroke-width="1.25"/>
<rect x="792.5" y="236.5" width="6" height="2" fill="rgba(205,205,216,0.6)" stroke="#000" stroke-width="1.1"/>
<line x1="803.5" x2="803.5" y1="234.2" y2="238.4" stroke="#000" stroke-width="1.25"/>
<rect x="800.0" y="235" width="7" height="1.3" fill="#000"/>
<line x1="811.5" x2="811.5" y1="222.5" y2="240.0" stroke="#000" stroke-width="1.25"/>
<rect x="808.0" y="235" width="7" height="3" fill="#000"/>
<line x1="819.5" x2="819.5" y1="228.2" y2="233.5" stroke="#000" stroke-width="1.25"/>
<line x1="819.5" x2="819.5" y1="236.5" y2="238.9" stroke="#000" stroke-width="1.25"/>
<rect x="816.5" y="233.5" width="6" height="3" fill="rgba(205,205,216,0.6)" stroke="#000" stroke-width="1.1"/>
<line x1="827.5" x2="827.5" y1="226.4" y2="233.6" stroke="#000" stroke-width="1.25"/>
<rect x="824.0" y="233" width="7" height="1.3" fill="#000"/>
<line x1="835.5" x2="835.5" y1="228.2" y2="229.5" stroke="#000" stroke-width="1.25"/>
<line x1="835.5" x2="835.5" y1="232.5" y2="233.2" stroke="#000" stroke-width="1.25"/>
<rect x="832.5" y="229.5" width="6" height="3" fill="rgba(205,205,216,0.6)" stroke="#000" stroke-width="1.1"/>
<line x1="843.5" x2="843.5" y1="211.2" y2="214.5" stroke="#000" stroke-width="1.25"/>
<line x1="843.5" x2="843.5" y1="228.5" y2="229.2" stroke="#000" stroke-width="1.25"/>
<rect x="840.5" y="214.5" width="6" height="14" fill="rgba(205,205,216,0.6)" stroke="#000" stroke-width="1.1"/>
<line x1="851.5" x2="851.5" y1="212.3" y2="219.3" stroke="#000" stroke-width="1.25"/>
<rect x="848.0" y="214" width="7" height="1.3" fill="#000"/>
<line x1="859.5" x2="859.5" y1="209.2" y2="212.5" stroke="#000" stroke-width="1.25"/>
<rect x="856.5" y="212.5" width="6" height="2" fill="rgba(205,205,216,0.6)" stroke="#000" stroke-width="1.1"/>
<line x1="867.5" x2="867.5" y1="197.2" y2="202.5" stroke="#000" stroke-width="1.25"/>
<line x1="867.5" x2="867.5" y1="210.5" y2="212.3" stroke="#000" stroke-width="1.25"/>
<rect x="864.5" y="202.5" width="6" height="8" fill="rgba(205,205,216,0.6)" stroke="#000" stroke-width="1.1"/>
<line x1="875.5" x2="875.5" y1="191.2" y2="193.5" stroke="#000" stroke-width="1.25"/>
<line x1="875.5" x2="875.5" y1="201.5" y2="206.5" stroke="#000" stroke-width="1.25"/>
<rect x="872.5" y="193.5" width="6" height="8" fill="rgba(205,205,216,0.6)" stroke="#000" stroke-width="1.1"/>
<line x1="883.5" x2="883.5" y1="192.8" y2="213.9" stroke="#000" stroke-width="1.25"/>
<rect x="880.0" y="193" width="7" height="15" fill="#000"/>
<line x1="891.5" x2="891.5" y1="206.8" y2="222.1" stroke="#000" stroke-width="1.25"/>
<rect x="888.0" y="208" width="7" height="8" fill="#000"/>
<line x1="899.5" x2="899.5" y1="211.2" y2="222.1" stroke="#000" stroke-width="1.25"/>
<rect x="896.0" y="216" width="7" height="3" fill="#000"/>
<line x1="907.5" x2="907.5" y1="216.2" y2="220.1" stroke="#000" stroke-width="1.25"/>
<rect x="904.0" y="218" width="7" height="1.3" fill="#000"/>
<line x1="915.5" x2="915.5" y1="211.2" y2="214.5" stroke="#000" stroke-width="1.25"/>
<line x1="915.5" x2="915.5" y1="218.5" y2="219.0" stroke="#000" stroke-width="1.25"/>
<rect x="912.5" y="214.5" width="6" height="4" fill="rgba(205,205,216,0.6)" stroke="#000" stroke-width="1.1"/>
<line x1="923.5" x2="923.5" y1="208.1" y2="220.9" stroke="#000" stroke-width="1.25"/>
<rect x="920.0" y="214" width="7" height="4" fill="#000"/>
<line x1="931.5" x2="931.5" y1="184.2" y2="189.5" stroke="#000" stroke-width="1.25"/>
<line x1="931.5" x2="931.5" y1="216.5" y2="217.0" stroke="#000" stroke-width="1.25"/>
<rect x="928.5" y="189.5" width="6" height="27" fill="rgba(205,205,216,0.6)" stroke="#000" stroke-width="1.1"/>
<line x1="939.5" x2="939.5" y1="180.0" y2="186.5" stroke="#000" stroke-width="1.25"/>
<line x1="939.5" x2="939.5" y1="189.5" y2="194.7" stroke="#000" stroke-width="1.25"/>
<rect x="936.5" y="186.5" width="6" height="3" fill="rgba(205,205,216,0.6)" stroke="#000" stroke-width="1.1"/>
<line x1="947.5" x2="947.5" y1="182.2" y2="195.6" stroke="#000" stroke-width="1.25"/>
<rect x="944.0" y="186" width="7" height="4" fill="#000"/>
<line x1="955.5" x2="955.5" y1="188.9" y2="197.8" stroke="#000" stroke-width="1.25"/>
<rect x="952.0" y="190" width="7" height="3" fill="#000"/>
<line x1="963.5" x2="963.5" y1="189.4" y2="192.5" stroke="#000" stroke-width="1.25"/>
<rect x="960.5" y="192.5" width="6" height="2" fill="rgba(205,205,216,0.6)" stroke="#000" stroke-width="1.1"/>
<line x1="971.5" x2="971.5" y1="184.2" y2="194.4" stroke="#000" stroke-width="1.25"/>
<rect x="968.0" y="191" width="7" height="3" fill="#000"/>
<line x1="979.5" x2="979.5" y1="193.5" y2="208.7" stroke="#000" stroke-width="1.25"/>
<rect x="976.0" y="194" width="7" height="13" fill="#000"/>
<line x1="987.5" x2="987.5" y1="205.0" y2="238.9" stroke="#000" stroke-width="1.25"/>
<rect x="984.0" y="206" width="7" height="32" fill="#000"/>
<line x1="995.5" x2="995.5" y1="221.2" y2="231.5" stroke="#000" stroke-width="1.25"/>
<line x1="995.5" x2="995.5" y1="237.5" y2="245.6" stroke="#000" stroke-width="1.25"/>
<rect x="992.5" y="231.5" width="6" height="6" fill="rgba(205,205,216,0.6)" stroke="#000" stroke-width="1.1"/>
<line x1="1003.5" x2="1003.5" y1="225.3" y2="240.9" stroke="#000" stroke-width="1.25"/>
<rect x="1000.0" y="231" width="7" height="4" fill="#000"/>
<line x1="1011.5" x2="1011.5" y1="227.1" y2="242.8" stroke="#000" stroke-width="1.25"/>
<rect x="1008.0" y="235" width="7" height="1.3" fill="#000"/>
<line x1="1019.5" x2="1019.5" y1="233.1" y2="235.9" stroke="#000" stroke-width="1.25"/>
<rect x="1016.0" y="235" width="7" height="1.3" fill="#000"/>
<line x1="1028.5" x2="1028.5" y1="234.2" y2="255.6" stroke="#000" stroke-width="1.25"/>
<rect x="1025.0" y="235" width="7" height="17" fill="#000"/>
<line x1="1036.5" x2="1036.5" y1="235.3" y2="238.5" stroke="#000" stroke-width="1.25"/>
<line x1="1036.5" x2="1036.5" y1="251.5" y2="252.1" stroke="#000" stroke-width="1.25"/>
<rect x="1033.5" y="238.5" width="6" height="13" fill="rgba(205,205,216,0.6)" stroke="#000" stroke-width="1.1"/>
<line x1="1044.5" x2="1044.5" y1="224.8" y2="226.5" stroke="#000" stroke-width="1.25"/>
<line x1="1044.5" x2="1044.5" y1="237.5" y2="241.7" stroke="#000" stroke-width="1.25"/>
<rect x="1041.5" y="226.5" width="6" height="11" fill="rgba(205,205,216,0.6)" stroke="#000" stroke-width="1.1"/>
<line x1="1052.5" x2="1052.5" y1="223.7" y2="230.6" stroke="#000" stroke-width="1.25"/>
<rect x="1049.0" y="226" width="7" height="3" fill="#000"/>
<line x1="1060.5" x2="1060.5" y1="227.8" y2="260.0" stroke="#000" stroke-width="1.25"/>
<rect x="1057.0" y="228" width="7" height="24" fill="#000"/>
<line x1="1068.5" x2="1068.5" y1="249.8" y2="273.8" stroke="#000" stroke-width="1.25"/>
<rect x="1065.0" y="251" width="7" height="15" fill="#000"/>
<line x1="1076.5" x2="1076.5" y1="263.7" y2="321.6" stroke="#000" stroke-width="1.25"/>
<rect x="1073.0" y="265" width="7" height="33" fill="#000"/>
<line x1="1084.5" x2="1084.5" y1="294.4" y2="324.7" stroke="#000" stroke-width="1.25"/>
<rect x="1081.0" y="297" width="7" height="22" fill="#000"/>
<line x1="1092.5" x2="1092.5" y1="304.4" y2="311.5" stroke="#000" stroke-width="1.25"/>
<line x1="1092.5" x2="1092.5" y1="318.5" y2="332.3" stroke="#000" stroke-width="1.25"/>
<rect x="1089.5" y="311.5" width="6" height="7" fill="rgba(205,205,216,0.6)" stroke="#000" stroke-width="1.1"/>
<line x1="1100.5" x2="1100.5" y1="307.8" y2="338.9" stroke="#000" stroke-width="1.25"/>
<rect x="1097.0" y="310" width="7" height="15" fill="#000"/>
<line x1="1108.5" x2="1108.5" y1="316.4" y2="342.7" stroke="#000" stroke-width="1.25"/>
<rect x="1105.0" y="324" width="7" height="11" fill="#000"/>
<line x1="1116.5" x2="1116.5" y1="331.4" y2="374.5" stroke="#000" stroke-width="1.25"/>
<rect x="1113.0" y="334" width="7" height="40" fill="#000"/>
<line x1="1124.5" x2="1124.5" y1="341.3" y2="345.5" stroke="#000" stroke-width="1.25"/>
<line x1="1124.5" x2="1124.5" y1="373.5" y2="384.1" stroke="#000" stroke-width="1.25"/>
<rect x="1121.5" y="345.5" width="6" height="28" fill="rgba(205,205,216,0.6)" stroke="#000" stroke-width="1.1"/>
<line x1="1132.5" x2="1132.5" y1="338.1" y2="343.5" stroke="#000" stroke-width="1.25"/>
<line x1="1132.5" x2="1132.5" y1="345.5" y2="352.8" stroke="#000" stroke-width="1.25"/>
<rect x="1129.5" y="343.5" width="6" height="2" fill="rgba(205,205,216,0.6)" stroke="#000" stroke-width="1.1"/>
<line x1="1140.5" x2="1140.5" y1="334.3" y2="345.2" stroke="#000" stroke-width="1.25"/>
<rect x="1137.0" y="342" width="7" height="1.3" fill="#000"/>
<line x1="1148.5" x2="1148.5" y1="334.3" y2="340.5" stroke="#000" stroke-width="1.25"/>
<line x1="1148.5" x2="1148.5" y1="342.5" y2="351.9" stroke="#000" stroke-width="1.25"/>
<rect x="1145.5" y="340.5" width="6" height="2" fill="rgba(205,205,216,0.6)" stroke="#000" stroke-width="1.1"/>
<line x1="1156.5" x2="1156.5" y1="337.5" y2="353.8" stroke="#000" stroke-width="1.25"/>
<rect x="1153.0" y="340" width="7" height="11" fill="#000"/>
<line x1="1164.5" x2="1164.5" y1="349.0" y2="364.9" stroke="#000" stroke-width="1.25"/>
<rect x="1161.0" y="350" width="7" height="11" fill="#000"/>
<line x1="1172.5" x2="1172.5" y1="352.8" y2="364.9" stroke="#000" stroke-width="1.25"/>
<rect x="1169.0" y="359" width="7" height="1.3" fill="#000"/>
<line x1="1180.5" x2="1180.5" y1="343.3" y2="348.5" stroke="#000" stroke-width="1.25"/>
<line x1="1180.5" x2="1180.5" y1="359.5" y2="361.8" stroke="#000" stroke-width="1.25"/>
<rect x="1177.5" y="348.5" width="6" height="11" fill="rgba(205,205,216,0.6)" stroke="#000" stroke-width="1.1"/>
<line x1="1188.5" x2="1188.5" y1="339.4" y2="343.5" stroke="#000" stroke-width="1.25"/>
<rect x="1185.5" y="343.5" width="6" height="4" fill="rgba(205,205,216,0.6)" stroke="#000" stroke-width="1.1"/>
<line x1="1196.5" x2="1196.5" y1="340.0" y2="361.1" stroke="#000" stroke-width="1.25"/>
<rect x="1193.0" y="342" width="7" height="16" fill="#000"/>
<line x1="1204.5" x2="1204.5" y1="350.3" y2="353.5" stroke="#000" stroke-width="1.25"/>
<line x1="1204.5" x2="1204.5" y1="357.5" y2="359.9" stroke="#000" stroke-width="1.25"/>
<rect x="1201.5" y="353.5" width="6" height="4" fill="rgba(205,205,216,0.6)" stroke="#000" stroke-width="1.1"/>
<line x1="1212.5" x2="1212.5" y1="350.9" y2="359.9" stroke="#000" stroke-width="1.25"/>
<rect x="1209.0" y="353" width="7" height="1.3" fill="#000"/>
<line x1="1220.5" x2="1220.5" y1="348.0" y2="361.8" stroke="#000" stroke-width="1.25"/>
<rect x="1217.0" y="354" width="7" height="5" fill="#000"/>
<line x1="1228.5" x2="1228.5" y1="353.8" y2="363.8" stroke="#000" stroke-width="1.25"/>
<rect x="1225.0" y="358" width="7" height="1.3" fill="#000"/>
<line x1="1236.5" x2="1236.5" y1="354.8" y2="356.5" stroke="#000" stroke-width="1.25"/>
<line x1="1236.5" x2="1236.5" y1="358.5" y2="361.5" stroke="#000" stroke-width="1.25"/>
<rect x="1233.5" y="356.5" width="6" height="2" fill="rgba(205,205,216,0.6)" stroke="#000" stroke-width="1.1"/>
<line x1="1244.5" x2="1244.5" y1="353.4" y2="358.6" stroke="#000" stroke-width="1.25"/>
<rect x="1241.0" y="356" width="7" height="1.3" fill="#000"/>
<line x1="1252.5" x2="1252.5" y1="354.8" y2="361.1" stroke="#000" stroke-width="1.25"/>
<rect x="1249.0" y="356" width="7" height="3" fill="#000"/>
<line x1="1260.5" x2="1260.5" y1="357.5" y2="372.8" stroke="#000" stroke-width="1.25"/>
<rect x="1257.0" y="358" width="7" height="13" fill="#000"/>
<line x1="1268.5" x2="1268.5" y1="369.0" y2="377.2" stroke="#000" stroke-width="1.25"/>
<rect x="1265.0" y="370" width="7" height="1.3" fill="#000"/>
<line x1="1276.5" x2="1276.5" y1="334.3" y2="345.5" stroke="#000" stroke-width="1.25"/>
<line x1="1276.5" x2="1276.5" y1="370.5" y2="371.4" stroke="#000" stroke-width="1.25"/>
<rect x="1273.5" y="345.5" width="6" height="25" fill="rgba(205,205,216,0.6)" stroke="#000" stroke-width="1.1"/>
<line x1="1284.5" x2="1284.5" y1="342.2" y2="355.6" stroke="#000" stroke-width="1.25"/>
<rect x="1281.0" y="345" width="7" height="5" fill="#000"/>
<line x1="1292.5" x2="1292.5" y1="345.2" y2="366.7" stroke="#000" stroke-width="1.25"/>
<rect x="1289.0" y="349" width="7" height="13" fill="#000"/>
<line x1="1300.5" x2="1300.5" y1="354.2" y2="357.5" stroke="#000" stroke-width="1.25"/>
<line x1="1300.5" x2="1300.5" y1="360.5" y2="372.7" stroke="#000" stroke-width="1.25"/>
<rect x="1297.5" y="357.5" width="6" height="3" fill="rgba(205,205,216,0.6)" stroke="#000" stroke-width="1.1"/>
<line x1="1308.5" x2="1308.5" y1="345.9" y2="363.7" stroke="#000" stroke-width="1.25"/>
<rect x="1305.0" y="357" width="7" height="4" fill="#000"/>
<line x1="1317.5" x2="1317.5" y1="341.5" y2="349.5" stroke="#000" stroke-width="1.25"/>
<line x1="1317.5" x2="1317.5" y1="360.5" y2="361.8" stroke="#000" stroke-width="1.25"/>
<rect x="1314.5" y="349.5" width="6" height="11" fill="rgba(205,205,216,0.6)" stroke="#000" stroke-width="1.1"/>
<line x1="1325.5" x2="1325.5" y1="347.3" y2="360.7" stroke="#000" stroke-width="1.25"/>
<rect x="1322.0" y="349" width="7" height="7" fill="#000"/>
<line x1="1333.5" x2="1333.5" y1="328.1" y2="338.5" stroke="#000" stroke-width="1.25"/>
<line x1="1333.5" x2="1333.5" y1="355.5" y2="358.8" stroke="#000" stroke-width="1.25"/>
<rect x="1330.5" y="338.5" width="6" height="17" fill="rgba(205,205,216,0.6)" stroke="#000" stroke-width="1.1"/>
<line x1="1341.5" x2="1341.5" y1="332.5" y2="345.9" stroke="#000" stroke-width="1.25"/>
<rect x="1338.0" y="337" width="7" height="8" fill="#000"/>
<line x1="1349.5" x2="1349.5" y1="341.1" y2="357.4" stroke="#000" stroke-width="1.25"/>
<rect x="1346.0" y="344" width="7" height="12" fill="#000"/>
<line x1="1357.5" x2="1357.5" y1="353.6" y2="358.8" stroke="#000" stroke-width="1.25"/>
<rect x="1354.0" y="355" width="7" height="2" fill="#000"/>
<line x1="1365.5" x2="1365.5" y1="354.9" y2="362.6" stroke="#000" stroke-width="1.25"/>
<rect x="1362.0" y="356" width="7" height="5" fill="#000"/>
<line x1="1373.5" x2="1373.5" y1="345.9" y2="353.5" stroke="#000" stroke-width="1.25"/>
<line x1="1373.5" x2="1373.5" y1="359.5" y2="360.3" stroke="#000" stroke-width="1.25"/>
<rect x="1370.5" y="353.5" width="6" height="6" fill="rgba(205,205,216,0.6)" stroke="#000" stroke-width="1.1"/>
<line x1="1381.5" x2="1381.5" y1="342.0" y2="348.5" stroke="#000" stroke-width="1.25"/>
<line x1="1381.5" x2="1381.5" y1="353.5" y2="353.8" stroke="#000" stroke-width="1.25"/>
<rect x="1378.5" y="348.5" width="6" height="5" fill="rgba(205,205,216,0.6)" stroke="#000" stroke-width="1.1"/>
<line x1="1389.5" x2="1389.5" y1="342.1" y2="346.5" stroke="#000" stroke-width="1.25"/>
<line x1="1389.5" x2="1389.5" y1="348.5" y2="351.7" stroke="#000" stroke-width="1.25"/>
<rect x="1386.5" y="346.5" width="6" height="2" fill="rgba(205,205,216,0.6)" stroke="#000" stroke-width="1.1"/>
<line x1="1397.5" x2="1397.5" y1="340.8" y2="344.5" stroke="#000" stroke-width="1.25"/>
<line x1="1397.5" x2="1397.5" y1="346.5" y2="349.7" stroke="#000" stroke-width="1.25"/>
<rect x="1394.5" y="344.5" width="6" height="2" fill="rgba(205,205,216,0.6)" stroke="#000" stroke-width="1.1"/>
<line x1="1405.5" x2="1405.5" y1="327.2" y2="341.5" stroke="#000" stroke-width="1.25"/>
<rect x="1402.5" y="341.5" width="6" height="3" fill="rgba(205,205,216,0.6)" stroke="#000" stroke-width="1.1"/>
<line x1="15" x2="1679" y1="341.5" y2="341.5" stroke="#c9ccd8" stroke-width="1.1" stroke-dasharray="1 2"/>
</g>
<text x="16.1" y="28.7" font-size="17.4" fill="#0c0e14" font-weight="normal" text-anchor="start" textLength="121.0" lengthAdjust="spacingAndGlyphs" stroke="#0c0e14" stroke-width="0.3" stroke-linejoin="round">CryptoFXStreet</text>
<text x="143.5" y="28.7" font-size="17.4" fill="#0c0e14" font-weight="normal" text-anchor="start" textLength="61.0" lengthAdjust="spacingAndGlyphs" stroke="#0c0e14" stroke-width="0.3" stroke-linejoin="round">created</text>
<text x="211.4" y="28.7" font-size="17.4" fill="#0c0e14" font-weight="normal" text-anchor="start" textLength="33.7" lengthAdjust="spacingAndGlyphs" stroke="#0c0e14" stroke-width="0.3" stroke-linejoin="round">with</text>
<text x="252.0" y="28.7" font-size="17.4" fill="#0c0e14" font-weight="normal" text-anchor="start" textLength="140.5" lengthAdjust="spacingAndGlyphs" stroke="#0c0e14" stroke-width="0.3" stroke-linejoin="round">TradingView.com,</text>
<text x="399.4" y="28.7" font-size="17.4" fill="#0c0e14" font-weight="normal" text-anchor="start" textLength="28.9" lengthAdjust="spacingAndGlyphs" stroke="#0c0e14" stroke-width="0.3" stroke-linejoin="round">Mar</text>
<text x="436.6" y="28.7" font-size="17.4" fill="#0c0e14" font-weight="normal" text-anchor="start" textLength="21.1" lengthAdjust="spacingAndGlyphs" stroke="#0c0e14" stroke-width="0.3" stroke-linejoin="round">13,</text>
<text x="465.1" y="28.7" font-size="17.4" fill="#0c0e14" font-weight="normal" text-anchor="start" textLength="36.3" lengthAdjust="spacingAndGlyphs" stroke="#0c0e14" stroke-width="0.3" stroke-linejoin="round">2026</text>
<text x="510.1" y="28.7" font-size="17.4" fill="#0c0e14" font-weight="normal" text-anchor="start" textLength="40.6" lengthAdjust="spacingAndGlyphs" stroke="#0c0e14" stroke-width="0.3" stroke-linejoin="round">19:18</text>
<text x="558.5" y="28.7" font-size="17.4" fill="#0c0e14" font-weight="normal" text-anchor="start" textLength="48.4" lengthAdjust="spacingAndGlyphs" stroke="#0c0e14" stroke-width="0.3" stroke-linejoin="round">UTC-4</text>
<text x="27.8" y="69.7" font-size="17.3" fill="#131722" font-weight="normal" text-anchor="start" textLength="77.8" lengthAdjust="spacingAndGlyphs" stroke="#131722" stroke-width="0.3" stroke-linejoin="round">Ethereum</text>
<text x="127.5" y="69.7" font-size="17.3" fill="#131722" font-weight="normal" text-anchor="start" textLength="69.2" lengthAdjust="spacingAndGlyphs" stroke="#131722" stroke-width="0.3" stroke-linejoin="round">TetherUS</text>
<text x="216.5" y="69.7" font-size="17.3" fill="#131722" font-weight="normal" text-anchor="start" textLength="18.5" lengthAdjust="spacingAndGlyphs" stroke="#131722" stroke-width="0.3" stroke-linejoin="round">1D</text>
<text x="253.7" y="69.7" font-size="17.3" fill="#131722" font-weight="normal" text-anchor="start" textLength="61.1" lengthAdjust="spacingAndGlyphs" stroke="#131722" stroke-width="0.3" stroke-linejoin="round">Binance</text>
<text x="116.0" y="69.7" font-size="17.3" fill="#131722" font-weight="normal" text-anchor="middle" stroke="#131722" stroke-width="0.3" stroke-linejoin="round">/</text>
<text x="206.1" y="69.7" font-size="17.3" fill="#131722" font-weight="normal" text-anchor="middle" stroke="#131722" stroke-width="0.3" stroke-linejoin="round">·</text>
<text x="244.3" y="69.7" font-size="17.3" fill="#131722" font-weight="normal" text-anchor="middle" stroke="#131722" stroke-width="0.3" stroke-linejoin="round">·</text>
<text x="327.0" y="69.7" font-size="17.3" fill="#131722" font-weight="normal" text-anchor="start" textLength="81.0" lengthAdjust="spacingAndGlyphs" stroke="#131722" stroke-width="0.3" stroke-linejoin="round">O2,073.51</text>
<text x="420.0" y="69.7" font-size="17.3" fill="#131722" font-weight="normal" text-anchor="start" textLength="81.0" lengthAdjust="spacingAndGlyphs" stroke="#131722" stroke-width="0.3" stroke-linejoin="round">H2,209.03</text>
<text x="512.0" y="69.7" font-size="17.3" fill="#131722" font-weight="normal" text-anchor="start" textLength="78.0" lengthAdjust="spacingAndGlyphs" stroke="#131722" stroke-width="0.3" stroke-linejoin="round">L2,070.12</text>
<text x="602.0" y="69.7" font-size="17.3" fill="#131722" font-weight="normal" text-anchor="start" textLength="81.0" lengthAdjust="spacingAndGlyphs" stroke="#131722" stroke-width="0.3" stroke-linejoin="round">C2,091.88</text>
<text x="693.0" y="69.7" font-size="17.3" fill="#131722" font-weight="normal" text-anchor="start" textLength="128.0" lengthAdjust="spacingAndGlyphs" stroke="#131722" stroke-width="0.3" stroke-linejoin="round">+18.36 (+0.89%)</text>
<text x="27.8" y="95.6" font-size="17.3" fill="#131722" font-weight="normal" text-anchor="start" textLength="32.8" lengthAdjust="spacingAndGlyphs" stroke="#131722" stroke-width="0.3" stroke-linejoin="round">EMA</text>
<text x="65.8" y="95.6" font-size="17.3" fill="#131722" font-weight="normal" text-anchor="start" textLength="121.6" lengthAdjust="spacingAndGlyphs" stroke="#131722" stroke-width="0.3" stroke-linejoin="round">20/50/100/200</text>
<g clip-path="url(#cpRsi)">
<rect x="15" y="507.6" width="1664" height="67.8" fill="#f1eefa"/>
<line x1="15" x2="1679" y1="558.4" y2="558.4" stroke="#ebe8f5" stroke-width="1"/>
<polygon points="1074.9,575.4 1076.2,580.4 1084.2,586.9 1092.2,579.3 1100.3,583.1 1108.3,586.0 1116.3,594.7 1123.6,575.4" fill="url(#gOS)" opacity="0.8"/>
<line x1="15" x2="1679" y1="507.6" y2="507.6" stroke="#6f7380" stroke-width="1" stroke-dasharray="5.5 5.5"/>
<line x1="15" x2="1679" y1="541.4" y2="541.4" stroke="#a9abb5" stroke-width="1" stroke-dasharray="5.5 5.5"/>
<line x1="15" x2="1679" y1="575.4" y2="575.4" stroke="#6f7380" stroke-width="1" stroke-dasharray="5.5 5.5"/>
<polyline points="16.2,539.6 24.2,557.5 32.2,559.7 40.2,560.1 48.2,574.9 56.2,560.4 64.2,561.3 72.2,551.9 80.2,545.9 88.2,550.3 96.2,536.3 104.2,528.9 112.2,527.3 120.2,529.4 128.2,527.8 136.2,517.8 144.2,535.8 152.2,531.4 160.2,541.8 168.2,565.7 177.2,568.2 185.2,547.0 193.2,543.0 201.2,547.9 209.2,553.0 217.2,556.3 225.2,559.0 233.2,555.7 241.2,550.1 249.2,550.1 257.2,555.2 265.2,558.6 273.2,555.2 281.2,549.7 289.2,548.5 297.2,535.6 305.2,538.5 313.2,546.3 321.2,550.8 329.2,555.9 337.2,553.4 345.2,551.2 353.2,548.5 361.2,563.0 369.2,576.4 377.2,566.4 385.2,570.4 393.2,561.9 401.2,563.5 409.2,551.9 417.2,552.6 425.2,559.7 433.2,559.7 441.2,567.7 449.2,571.7 458.2,567.5 466.2,570.9 474.2,573.1 482.2,565.7 490.2,570.4 498.2,576.9 506.2,579.1 514.2,578.9 522.2,575.8 530.2,562.4 538.2,561.5 546.2,555.9 554.2,556.6 562.2,555.2 570.2,558.1 578.2,558.1 586.2,569.7 594.2,551.9 602.2,537.4 610.2,541.4 618.2,548.5 626.2,547.0 634.2,545.9 642.2,540.7 650.2,527.8 658.2,527.3 666.2,534.7 674.2,545.9 682.2,543.4 690.2,547.4 698.2,554.1 706.2,554.1 714.2,561.9 722.2,562.4 730.2,548.5 738.2,548.1 747.2,546.3 755.2,545.9 763.2,549.2 771.2,551.4 779.2,554.8 787.2,551.2 795.2,549.2 803.2,549.0 811.2,550.3 819.2,545.6 827.2,545.9 835.2,541.2 843.2,526.2 851.2,525.8 859.2,523.6 867.2,516.2 875.2,509.1 883.2,528.9 891.2,536.7 899.2,539.2 907.2,539.2 915.2,534.7 923.2,538.5 931.2,515.7 939.2,513.5 947.2,518.4 955.2,521.8 963.2,520.7 971.2,525.1 979.2,537.8 987.2,561.5 995.2,556.8 1003.2,559.0 1011.2,558.6 1019.2,558.8 1028.2,569.7 1036.2,555.2 1044.2,544.7 1052.2,546.8 1060.2,561.5 1068.2,568.6 1076.2,580.4 1084.2,586.9 1092.2,579.3 1100.2,583.1 1108.2,586.0 1116.2,594.7 1124.2,574.6 1132.2,573.1 1140.2,573.1 1148.2,571.5 1156.2,574.9 1164.2,578.0 1172.2,577.5 1180.2,567.5 1188.2,564.2 1196.2,570.2 1204.2,567.1 1212.2,567.1 1220.2,569.3 1228.2,569.7 1236.2,567.3 1244.2,566.8 1252.2,567.7 1260.2,574.6 1268.2,574.6 1276.2,549.2 1284.2,552.3 1292.2,559.7 1300.2,555.7 1308.2,557.9 1317.2,547.9 1325.2,551.9 1333.2,537.4 1341.2,542.3 1349.2,550.3 1357.2,551.4 1365.2,553.7 1373.2,547.4 1381.2,543.0 1389.2,541.4 1397.2,538.9 1405.2,536.9" fill="none" stroke="#7e57c2" stroke-width="1.6" stroke-linejoin="round" stroke-linecap="butt" />
<path d="M15.8 532.5 C17.1 532.7 19.8 533.2 23.9 533.8 C28.0 534.4 34.9 534.7 40.2 536.3 C45.5 537.8 50.6 541.1 55.8 543.0 C61.0 544.8 65.8 546.3 71.4 547.4 C77.0 548.5 83.2 549.3 89.2 549.7 C95.2 550.0 100.8 550.0 107.1 549.7 C113.4 549.4 121.2 548.8 127.2 547.9 C133.2 546.9 137.2 545.5 142.8 544.1 C148.4 542.6 154.7 539.9 160.6 539.2 C166.5 538.4 171.8 539.7 178.5 539.6 C185.2 539.6 193.4 538.2 200.8 538.9 C208.2 539.7 215.7 542.3 223.1 544.1 C230.5 545.9 238.7 548.1 245.4 549.7 C252.1 551.3 258.7 552.8 263.2 553.7 C267.7 554.5 268.1 555.0 272.2 554.8 C276.3 554.6 282.6 553.2 287.8 552.6 C293.0 552.0 297.4 551.5 303.4 551.2 C309.3 550.9 317.2 551.0 323.5 550.8 C329.8 550.6 336.1 550.4 341.3 550.1 C346.5 549.8 350.2 548.8 354.7 549.2 C359.2 549.6 363.3 551.6 368.1 552.3 C372.9 553.0 378.4 552.9 383.7 553.4 C389.0 554.0 396.9 555.2 400.0 555.7 C403.1 556.2 398.2 555.7 402.3 556.3 C406.4 557.0 417.2 558.8 424.6 559.7 C432.0 560.6 440.2 561.1 446.9 561.9 C453.6 562.7 460.3 564.1 464.8 564.6 C469.3 565.1 470.7 565.1 473.7 565.1 C476.7 565.0 478.5 564.1 482.6 564.2 C486.7 564.2 493.0 564.7 498.2 565.3 C503.4 565.8 509.1 566.8 513.9 567.5 C518.7 568.2 522.0 569.4 527.2 569.7 C532.4 570.1 539.2 570.1 545.1 569.7 C551.0 569.4 557.0 568.1 562.9 567.5 C568.8 566.9 575.6 566.4 580.8 565.9 C586.0 565.5 589.0 565.8 594.2 564.8 C599.4 563.9 606.8 561.6 612.0 560.1 C617.2 558.7 620.2 557.7 625.4 556.3 C630.6 555.0 637.6 553.3 643.2 551.9 C648.8 550.5 653.7 549.2 658.9 548.1 C664.1 547.0 669.7 546.0 674.5 545.2 C679.3 544.4 683.8 543.9 687.9 543.4 C692.0 542.9 695.7 542.4 699.0 542.3 C702.3 542.2 704.2 542.4 707.9 543.0 C711.6 543.6 716.5 545.4 721.3 545.9 C726.1 546.3 731.3 545.9 736.9 545.9 C742.5 545.9 749.6 545.4 754.8 545.9 C760.0 546.3 764.0 547.7 768.2 548.5 C772.4 549.4 778.0 550.3 780.0 550.8 C782.0 551.2 776.7 551.0 780.1 551.2 C783.5 551.4 793.9 551.9 800.2 551.9 C806.5 551.9 812.0 551.9 818.0 551.2 C824.0 550.6 829.9 549.2 835.9 548.1 C841.9 547.0 848.5 545.6 853.7 544.5 C858.9 543.4 862.6 542.6 867.1 541.4 C871.6 540.2 875.3 538.5 880.5 537.4 C885.7 536.3 892.3 535.5 898.3 534.7 C904.2 534.0 910.6 533.8 916.2 532.9 C921.8 532.1 926.6 530.7 931.8 529.6 C937.0 528.5 941.4 527.0 947.4 526.2 C953.4 525.5 962.1 524.9 967.5 525.1 C972.9 525.4 976.4 526.8 979.7 527.8 C983.1 528.8 984.8 530.2 987.6 531.1 C990.4 532.1 991.7 532.4 996.5 533.4 C1001.3 534.3 1011.4 535.9 1016.6 536.9 C1021.8 538.0 1023.6 538.8 1027.7 539.6 C1031.8 540.4 1037.0 540.9 1041.1 541.8 C1045.2 542.8 1047.7 543.5 1052.2 545.2 C1056.7 546.9 1062.7 549.3 1067.9 551.9 C1073.1 554.5 1078.3 558.6 1083.5 560.8 C1088.7 563.0 1093.5 563.7 1099.1 565.3 C1104.7 566.8 1111.7 569.1 1116.9 570.2 C1122.1 571.3 1127.5 571.6 1130.3 572.0 C1133.0 572.3 1130.7 572.2 1133.4 572.4 C1136.2 572.6 1142.3 572.3 1146.8 573.1 C1151.3 573.9 1155.8 576.1 1160.2 577.1 C1164.7 578.1 1169.0 579.3 1173.5 579.3 C1178.0 579.4 1181.7 578.3 1186.9 577.5 C1192.1 576.8 1198.8 575.8 1204.8 574.9 C1210.8 573.9 1216.6 572.7 1222.6 572.0 C1228.5 571.2 1235.3 570.7 1240.5 570.4 C1245.7 570.1 1249.5 570.0 1253.9 570.0 C1258.4 569.9 1262.0 570.6 1267.2 570.0 C1272.4 569.4 1278.0 567.3 1285.1 566.4 C1292.2 565.5 1302.9 565.3 1309.6 564.6 C1316.3 563.9 1321.1 562.8 1325.2 561.9 C1329.3 561.0 1329.7 560.3 1334.2 559.2 C1338.7 558.2 1346.8 556.5 1352.0 555.7 C1357.2 554.8 1360.6 555.0 1365.4 554.1 C1370.2 553.2 1376.2 551.0 1381.0 550.1 C1385.8 549.2 1390.3 549.5 1394.4 549.0 C1398.5 548.4 1403.7 547.1 1405.5 546.8" fill="none" stroke="#fdd835" stroke-width="1.6" stroke-linejoin="round" stroke-linecap="butt"/>
</g>
<text x="28.0" y="525.1" font-size="17.3" fill="#131722" font-weight="normal" text-anchor="start" textLength="23.0" lengthAdjust="spacingAndGlyphs" stroke="#131722" stroke-width="0.3" stroke-linejoin="round">RSI</text>
<g clip-path="url(#cpSt)">
<rect x="15" y="630.3" width="1664" height="48.2" fill="#e9f4fe"/>
<line x1="15" x2="1679" y1="630.3" y2="630.3" stroke="#6f7380" stroke-width="1" stroke-dasharray="5.5 5.5"/>
<line x1="15" x2="1679" y1="654.3" y2="654.3" stroke="#a9abb5" stroke-width="1" stroke-dasharray="5.5 5.5"/>
<line x1="15" x2="1679" y1="678.5" y2="678.5" stroke="#6f7380" stroke-width="1" stroke-dasharray="5.5 5.5"/>
<polyline points="16.2,664.7 24.2,679.2 32.2,683.7 40.2,684.8 48.2,689.2 56.2,675.9 64.2,675.4 72.2,662.9 80.2,655.1 88.2,661.8 96.2,642.4 104.2,626.8 112.2,621.6 120.2,624.1 128.2,623.9 136.2,617.4 144.2,639.7 152.2,633.5 160.2,648.6 168.2,670.3 177.2,674.7 185.2,650.2 193.2,644.6 201.2,651.8 209.2,660.2 217.2,665.8 225.2,669.6 233.2,665.8 241.2,660.2 249.2,660.7 257.2,662.5 265.2,666.5 273.2,658.7 281.2,657.6 289.2,657.6 297.2,630.8 305.2,633.0 313.2,651.3 321.2,661.3 329.2,675.9 337.2,671.4 345.2,666.9 353.2,662.5 361.2,688.8 369.2,678.1 377.2,669.6 385.2,677.0 393.2,668.5 401.2,670.7 409.2,658.7 417.2,657.3 425.2,664.2 433.2,662.0 441.2,678.1 449.2,688.8 458.2,683.7 466.2,685.9 474.2,685.9 482.2,674.1 490.2,679.2 498.2,689.9 506.2,683.0 514.2,682.5 522.2,680.3 530.2,668.0 538.2,665.8 546.2,659.8 554.2,644.2 562.2,641.3 570.2,646.8 578.2,645.3 586.2,668.0 594.2,634.6 602.2,616.7 610.2,626.8 618.2,646.2 626.2,644.2 634.2,641.7 642.2,631.7 650.2,622.8 658.2,626.3 666.2,636.8 674.2,653.1 682.2,650.2 690.2,655.3 698.2,671.8 706.2,680.8 714.2,688.8 722.2,687.7 730.2,669.8 738.2,669.8 747.2,666.9 755.2,665.8 763.2,671.4 771.2,669.2 779.2,673.0 787.2,663.6 795.2,659.6 803.2,659.1 811.2,650.2 819.2,641.3 827.2,641.3 835.2,634.6 843.2,621.2 851.2,620.5 859.2,620.1 867.2,621.6 875.2,616.1 883.2,640.2 891.2,652.4 899.2,658.0 907.2,658.4 915.2,651.3 923.2,656.9 931.2,621.6 939.2,621.9 947.2,631.2 955.2,637.9 963.2,635.2 971.2,641.3 979.2,662.5 987.2,690.8 995.2,677.0 1003.2,681.0 1011.2,680.8 1019.2,681.4 1028.2,689.9 1036.2,674.7 1044.2,662.9 1052.2,664.0 1060.2,684.8 1068.2,686.3 1076.2,679.6 1084.2,689.9 1092.2,679.6 1100.2,684.1 1108.2,688.6 1116.2,693.7 1124.2,674.7 1132.2,673.0 1140.2,673.0 1148.2,671.8 1156.2,677.6 1164.2,681.9 1172.2,679.2 1180.2,668.0 1188.2,656.9 1196.2,666.9 1204.2,661.3 1212.2,658.4 1220.2,654.7 1228.2,654.0 1236.2,671.4 1244.2,670.3 1252.2,674.7 1260.2,688.8 1268.2,680.3 1276.2,634.6 1284.2,641.3 1292.2,664.0 1300.2,656.2 1308.2,662.0 1317.2,641.7 1325.2,651.3 1333.2,627.9 1341.2,638.4 1349.2,658.0 1357.2,660.2 1365.2,666.3 1373.2,654.7 1381.2,649.1 1389.2,646.2 1397.2,641.3 1405.2,638.6" fill="none" stroke="#2962ff" stroke-width="1.6" stroke-linejoin="round" stroke-linecap="butt" />
<polyline points="16.2,660.7 24.2,668.0 32.2,677.0 40.2,682.5 48.2,685.9 56.2,683.0 64.2,680.3 72.2,671.4 80.2,664.2 88.2,660.2 96.2,653.1 104.2,642.4 112.2,630.1 120.2,623.9 128.2,623.0 136.2,621.9 144.2,626.8 152.2,630.1 160.2,640.8 168.2,652.4 177.2,664.7 185.2,665.1 193.2,656.4 201.2,648.6 209.2,652.4 217.2,659.6 225.2,665.1 233.2,667.4 241.2,665.4 249.2,662.5 257.2,661.3 265.2,663.1 273.2,662.5 281.2,660.9 289.2,658.0 297.2,648.6 305.2,640.2 313.2,638.4 321.2,648.6 329.2,663.1 337.2,669.2 345.2,671.4 353.2,666.5 361.2,672.5 369.2,676.5 377.2,679.2 385.2,675.2 393.2,671.4 401.2,672.1 409.2,666.3 417.2,662.5 425.2,659.8 433.2,660.9 441.2,668.0 449.2,675.9 458.2,683.7 466.2,686.1 474.2,685.2 482.2,681.9 490.2,679.2 498.2,680.8 506.2,684.1 514.2,685.2 522.2,682.1 530.2,677.0 538.2,670.9 546.2,664.7 554.2,656.9 562.2,648.0 570.2,644.2 578.2,644.6 586.2,653.5 594.2,649.1 602.2,639.0 610.2,626.1 618.2,630.1 626.2,639.5 634.2,644.2 642.2,639.0 650.2,631.7 658.2,626.8 666.2,628.6 674.2,639.0 682.2,646.2 690.2,653.1 698.2,659.1 706.2,669.2 714.2,680.8 722.2,686.3 730.2,682.5 738.2,675.9 747.2,669.2 755.2,667.6 763.2,668.0 771.2,669.2 779.2,670.9 787.2,668.0 795.2,665.1 803.2,660.7 811.2,655.8 819.2,650.2 827.2,644.2 835.2,638.4 843.2,632.3 851.2,625.2 859.2,620.5 867.2,621.2 875.2,619.6 883.2,626.8 891.2,636.4 899.2,650.6 907.2,656.2 915.2,655.8 923.2,655.3 931.2,644.2 939.2,633.9 947.2,624.5 955.2,629.7 963.2,634.6 971.2,638.4 979.2,646.4 987.2,665.1 995.2,677.0 1003.2,682.5 1011.2,679.6 1019.2,681.4 1028.2,684.1 1036.2,681.9 1044.2,676.3 1052.2,667.4 1060.2,670.9 1068.2,677.6 1076.2,683.2 1084.2,685.2 1092.2,683.2 1100.2,684.3 1108.2,683.7 1116.2,688.6 1124.2,685.2 1132.2,679.9 1140.2,673.2 1148.2,672.5 1156.2,673.6 1164.2,676.5 1172.2,679.2 1180.2,676.3 1188.2,668.0 1196.2,664.0 1204.2,661.3 1212.2,662.0 1220.2,658.0 1228.2,655.8 1236.2,660.2 1244.2,665.8 1252.2,671.8 1260.2,678.1 1268.2,681.4 1276.2,668.0 1284.2,652.4 1292.2,646.8 1300.2,653.5 1308.2,660.7 1317.2,653.1 1325.2,651.8 1333.2,640.6 1341.2,639.5 1349.2,641.7 1357.2,652.4 1365.2,661.3 1373.2,660.2 1381.2,656.9 1389.2,650.9 1397.2,645.7 1405.2,641.9" fill="none" stroke="#ff6d00" stroke-width="1.6" stroke-linejoin="round" stroke-linecap="butt" />
</g>
<text x="27.3" y="635.0" font-size="17.3" fill="#131722" font-weight="normal" text-anchor="start" textLength="43.0" lengthAdjust="spacingAndGlyphs" stroke="#131722" stroke-width="0.3" stroke-linejoin="round">Stoch</text>
<g clip-path="url(#cpAxis)">
<path d="M1680.0 74.00 H1768.0 a2 2 0 0 1 2 2 V97.90 a2 2 0 0 1 -2 2 H1680.0 Z" fill="#000"/>
<text x="1693.2" y="92.2" font-size="17.6" fill="#fff" font-weight="normal" text-anchor="start" textLength="69.5" lengthAdjust="spacingAndGlyphs" stroke="#fff" stroke-width="0.55" stroke-linejoin="round">4,134.08</text>
<path d="M1680.0 99.60 H1768.0 a2 2 0 0 1 2 2 V124.05 a2 2 0 0 1 -2 2 H1680.0 Z" fill="#000"/>
<text x="1693.2" y="117.7" font-size="17.6" fill="#fff" font-weight="normal" text-anchor="start" textLength="69.5" lengthAdjust="spacingAndGlyphs" stroke="#fff" stroke-width="0.55" stroke-linejoin="round">3,815.00</text>
<path d="M1680.0 125.75 H1768.0 a2 2 0 0 1 2 2 V148.20 a2 2 0 0 1 -2 2 H1680.0 Z" fill="#2e2e2e"/>
<text x="1693.2" y="142.8" font-size="17.6" fill="#fff" font-weight="bold" text-anchor="start" textLength="69.5" lengthAdjust="spacingAndGlyphs" stroke="#fff" stroke-width="0.2" stroke-linejoin="round">3,472.37</text>
<path d="M1680.0 149.90 H1768.0 a2 2 0 0 1 2 2 V175.05 a2 2 0 0 1 -2 2 H1680.0 Z" fill="#000"/>
<text x="1693.2" y="168.6" font-size="17.6" fill="#fff" font-weight="normal" text-anchor="start" textLength="69.5" lengthAdjust="spacingAndGlyphs" stroke="#fff" stroke-width="0.55" stroke-linejoin="round">3,057.55</text>
<path d="M1680.0 176.75 H1768.0 a2 2 0 0 1 2 2 V199.20 a2 2 0 0 1 -2 2 H1680.0 Z" fill="#0000ff"/>
<text x="1693.2" y="193.8" font-size="17.6" fill="#fff" font-weight="normal" text-anchor="start" textLength="69.5" lengthAdjust="spacingAndGlyphs" stroke="#fff" stroke-width="0.55" stroke-linejoin="round">2,858.95</text>
<path d="M1680.0 200.90 H1768.0 a2 2 0 0 1 2 2 V226.05 a2 2 0 0 1 -2 2 H1680.0 Z" fill="#000"/>
<text x="1693.2" y="219.6" font-size="17.6" fill="#fff" font-weight="normal" text-anchor="start" textLength="69.5" lengthAdjust="spacingAndGlyphs" stroke="#fff" stroke-width="0.55" stroke-linejoin="round">2,750.90</text>
<path d="M1680.0 227.75 H1768.0 a2 2 0 0 1 2 2 V250.50 a2 2 0 0 1 -2 2 H1680.0 Z" fill="#00ffff"/>
<text x="1693.2" y="244.7" font-size="17.6" fill="#000" font-weight="normal" text-anchor="start" textLength="69.5" lengthAdjust="spacingAndGlyphs" stroke="#000" stroke-width="0.3" stroke-linejoin="round">2,537.48</text>
<path d="M1680.0 252.20 H1768.0 a2 2 0 0 1 2 2 V277.20 a2 2 0 0 1 -2 2 H1680.0 Z" fill="#2e2e2e"/>
<text x="1693.2" y="270.9" font-size="17.6" fill="#fff" font-weight="bold" text-anchor="start" textLength="69.5" lengthAdjust="spacingAndGlyphs" stroke="#fff" stroke-width="0.2" stroke-linejoin="round">2,373.77</text>
<path d="M1680.0 278.90 H1768.0 a2 2 0 0 1 2 2 V301.40 a2 2 0 0 1 -2 2 H1680.0 Z" fill="#ff8000"/>
<text x="1693.2" y="296.0" font-size="17.6" fill="#fff" font-weight="normal" text-anchor="start" textLength="69.5" lengthAdjust="spacingAndGlyphs" stroke="#fff" stroke-width="0.55" stroke-linejoin="round">2,214.69</text>
<path d="M1680.0 303.10 H1768.0 a2 2 0 0 1 2 2 V326.60 a2 2 0 0 1 -2 2 H1680.0 Z" fill="#2e2e2e"/>
<text x="1693.2" y="321.8" font-size="17.6" fill="#fff" font-weight="bold" text-anchor="start" textLength="69.5" lengthAdjust="spacingAndGlyphs" stroke="#fff" stroke-width="0.2" stroke-linejoin="round">2,166.95</text>
<path d="M1680 328.3 H1768 a2 2 0 0 1 2 2 V374.2 a2 2 0 0 1 -2 2 H1680 Z" fill="#d1d4dc"/>
<text x="1693.2" y="347.1" font-size="17.6" fill="#000" font-weight="normal" text-anchor="start" textLength="69.5" lengthAdjust="spacingAndGlyphs" stroke="#000" stroke-width="0.3" stroke-linejoin="round">2,091.88</text>
<text x="1693.2" y="367.5" font-size="17.6" fill="#33353c" font-weight="normal" text-anchor="start" textLength="43.5" lengthAdjust="spacingAndGlyphs" stroke="#33353c" stroke-width="0.3" stroke-linejoin="round">41:38</text>
<path d="M1680.0 375.90 H1768.0 a2 2 0 0 1 2 2 V398.65 a2 2 0 0 1 -2 2 H1680.0 Z" fill="#ff0000"/>
<text x="1693.2" y="393.8" font-size="17.6" fill="#fff" font-weight="normal" text-anchor="start" textLength="69.5" lengthAdjust="spacingAndGlyphs" stroke="#fff" stroke-width="0.55" stroke-linejoin="round">2,032.04</text>
<path d="M1680.0 400.35 H1768.0 a2 2 0 0 1 2 2 V424.80 a2 2 0 0 1 -2 2 H1680.0 Z" fill="#000"/>
<text x="1693.2" y="418.7" font-size="17.6" fill="#fff" font-weight="normal" text-anchor="start" textLength="69.5" lengthAdjust="spacingAndGlyphs" stroke="#fff" stroke-width="0.55" stroke-linejoin="round">1,801.98</text>
<text x="1693.2" y="456.5" font-size="17.6" fill="#131722" font-weight="normal" text-anchor="start" textLength="69.5" lengthAdjust="spacingAndGlyphs" stroke="#131722" stroke-width="0.3" stroke-linejoin="round">1,200.00</text>
<path d="M1680.0 426.50 H1768.0 a2 2 0 0 1 2 2 V451.10 a2 2 0 0 1 -2 2 H1680.0 Z" fill="#2e2e2e"/>
<text x="1693.2" y="444.9" font-size="17.6" fill="#fff" font-weight="bold" text-anchor="start" textLength="69.5" lengthAdjust="spacingAndGlyphs" stroke="#fff" stroke-width="0.2" stroke-linejoin="round">1,476.78</text>
<path d="M1680.0 461.20 H1768.0 a2 2 0 0 1 2 2 V486.00 a2 2 0 0 1 -2 2 H1680.0 Z" fill="#000"/>
<text x="1693.2" y="480.2" font-size="17.6" fill="#fff" font-weight="normal" text-anchor="start" textLength="69.5" lengthAdjust="spacingAndGlyphs" stroke="#fff" stroke-width="0.55" stroke-linejoin="round">1,016.90</text>
</g>
<rect x="1685" y="46.8" width="86.5" height="38.4" rx="7" ry="7" fill="#fff" stroke="#f0f0f2" stroke-width="1.2"/>
<text x="1699.6" y="71.4" font-size="17.8" fill="#131722" font-weight="normal" text-anchor="start" textLength="41.0" lengthAdjust="spacingAndGlyphs" stroke="#131722" stroke-width="0.3" stroke-linejoin="round">USDT</text>
<path d="M1680 524.1 H1743 a2 2 0 0 1 2 2 V548.2 a2 2 0 0 1 -2 2 H1680 Z" fill="#7e57c2"/>
<text x="1693.2" y="543.7" font-size="17.6" fill="#fff" font-weight="normal" text-anchor="start" textLength="43.5" lengthAdjust="spacingAndGlyphs" stroke="#fff" stroke-width="0.55" stroke-linejoin="round">52.33</text>
<path d="M1680 550.2 H1743 a2 2 0 0 1 2 2 V574.8 a2 2 0 0 1 -2 2 H1680 Z" fill="#fdd835"/>
<text x="1693.2" y="570.2" font-size="17.6" fill="#000" font-weight="normal" text-anchor="start" textLength="43.5" lengthAdjust="spacingAndGlyphs" stroke="#000" stroke-width="0.3" stroke-linejoin="round">46.51</text>
<text x="1693.2" y="620.0" font-size="17.6" fill="#131722" font-weight="normal" text-anchor="start" textLength="53.7" lengthAdjust="spacingAndGlyphs" stroke="#131722" stroke-width="0.3" stroke-linejoin="round">100.00</text>
<path d="M1680 626.0 H1743 a2 2 0 0 1 2 2 V649.2 a2 2 0 0 1 -2 2 H1680 Z" fill="#2962ff"/>
<text x="1693.2" y="645.6" font-size="17.6" fill="#fff" font-weight="normal" text-anchor="start" textLength="43.5" lengthAdjust="spacingAndGlyphs" stroke="#fff" stroke-width="0.55" stroke-linejoin="round">68.65</text>
<path d="M1680 651.2 H1743 a2 2 0 0 1 2 2 V676.0 a2 2 0 0 1 -2 2 H1680 Z" fill="#ff6d00"/>
<text x="1693.2" y="670.7" font-size="17.6" fill="#fff" font-weight="normal" text-anchor="start" textLength="43.5" lengthAdjust="spacingAndGlyphs" stroke="#fff" stroke-width="0.55" stroke-linejoin="round">64.57</text>
<text x="1693.2" y="700.6" font-size="17.6" fill="#131722" font-weight="normal" text-anchor="start" textLength="34.5" lengthAdjust="spacingAndGlyphs" stroke="#131722" stroke-width="0.3" stroke-linejoin="round">0.00</text>
<text x="82.5" y="731.1" font-size="17.4" fill="#131722" font-weight="normal" text-anchor="start" textLength="27.7" lengthAdjust="spacingAndGlyphs" stroke="#131722" stroke-width="0.3" stroke-linejoin="round">Oct</text>
<text x="330.5" y="731.1" font-size="17.4" fill="#131722" font-weight="normal" text-anchor="start" textLength="29.5" lengthAdjust="spacingAndGlyphs" stroke="#131722" stroke-width="0.3" stroke-linejoin="round">Nov</text>
<text x="571.2" y="731.1" font-size="17.4" fill="#131722" font-weight="normal" text-anchor="start" textLength="29.8" lengthAdjust="spacingAndGlyphs" stroke="#131722" stroke-width="0.3" stroke-linejoin="round">Dec</text>
<text x="814.5" y="731.1" font-size="17.4" fill="#131722" font-weight="bold" text-anchor="start" textLength="40.9" lengthAdjust="spacingAndGlyphs" >2026</text>
<text x="1069.4" y="731.1" font-size="17.4" fill="#131722" font-weight="normal" text-anchor="start" textLength="28.8" lengthAdjust="spacingAndGlyphs" stroke="#131722" stroke-width="0.3" stroke-linejoin="round">Feb</text>
<text x="1294.1" y="731.1" font-size="17.4" fill="#131722" font-weight="normal" text-anchor="start" textLength="29.0" lengthAdjust="spacingAndGlyphs" stroke="#131722" stroke-width="0.3" stroke-linejoin="round">Mar</text>
<text x="1543.7" y="731.1" font-size="17.4" fill="#131722" font-weight="normal" text-anchor="start" textLength="27.5" lengthAdjust="spacingAndGlyphs" stroke="#131722" stroke-width="0.3" stroke-linejoin="round">Apr</text>
<g fill="#131313">
<path d="M18.1 778.1 H35.85 V800.4 H27.2 V786.75 H18.1 Z"/>
<circle cx="43.45" cy="782.4" r="4.32"/>
<path d="M52.55 778.1 H62.8 L53.7 800.4 H43.77 Z"/>
</g>
<text x="73.2" y="800.6" font-size="32.6" fill="#131313" font-weight="bold" text-anchor="start" textLength="181.7" lengthAdjust="spacingAndGlyphs" >TradingView</text>
</svg></body></html>
